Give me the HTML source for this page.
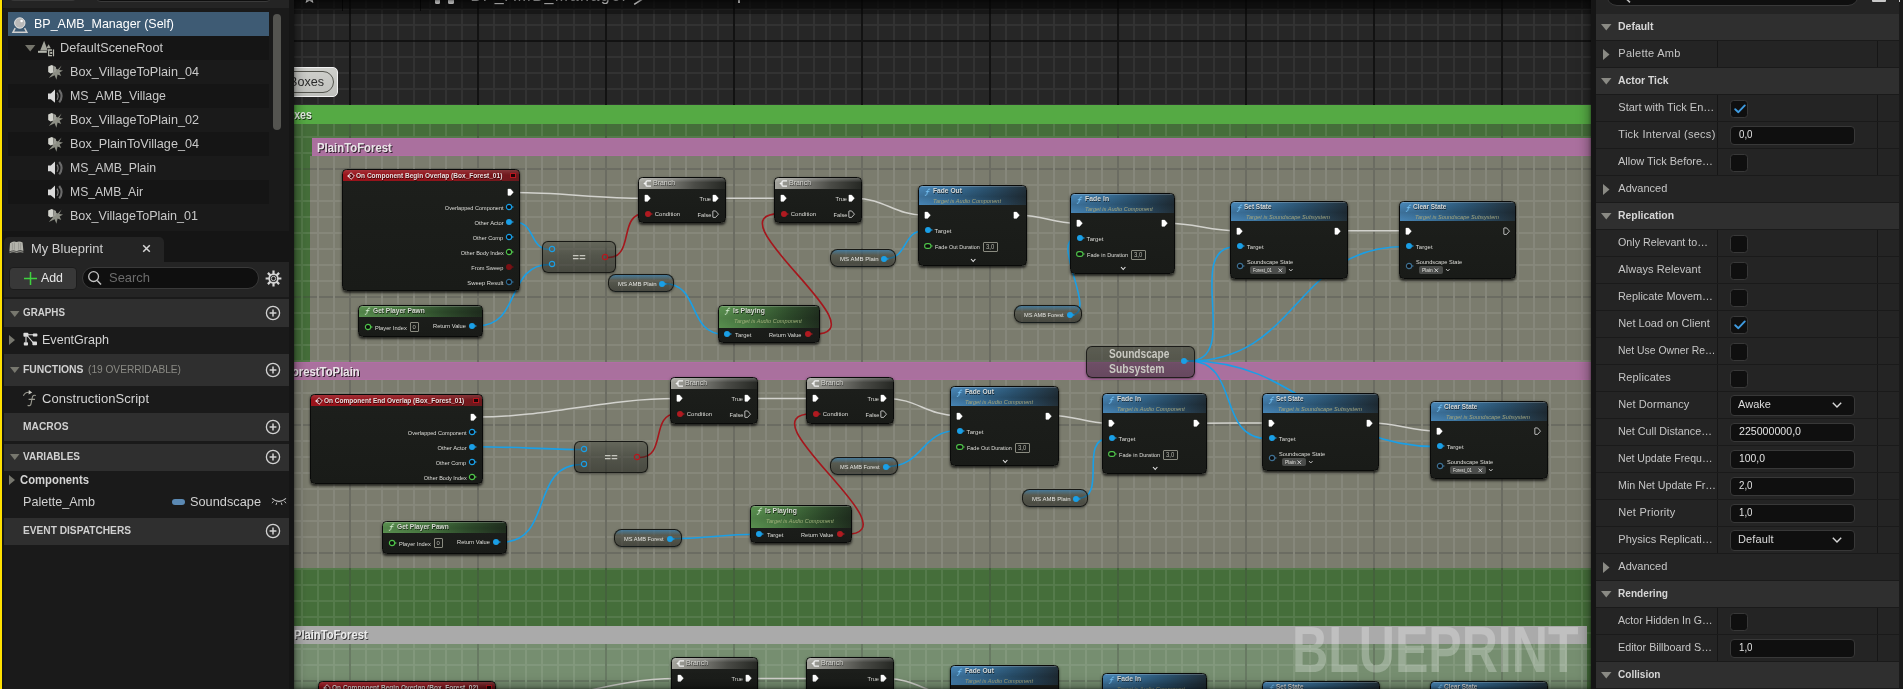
<!DOCTYPE html>
<html lang="en"><head><meta charset="utf-8"><title>BP_AMB_Manager - Blueprint Editor</title>
<style>
*{box-sizing:border-box;margin:0;padding:0}
html,body{width:1903px;height:689px;overflow:hidden;background:#151515}
body{font-family:"Liberation Sans",sans-serif;color:#c8c8c8}
#app{position:absolute;left:0;top:0;width:1903px;height:689px;overflow:hidden;will-change:transform}
.t{position:absolute;white-space:pre;display:block}
.a{position:absolute}
.ystrip{position:absolute;left:0;top:0;width:2.4px;height:689px;background:#ffe100}
svg{position:absolute;overflow:visible}
/* ---------- left ---------- */
#left{position:absolute;left:0;top:0;width:294px;height:689px}
.lrow{position:absolute;left:8px;width:261px;height:24px}
.hdr{position:absolute;left:4px;width:285px;background:#2f2f2f}
/* ---------- graph ---------- */
#graph{position:absolute;left:294px;top:0;width:1297px;height:689px;overflow:hidden;background:#262626}
.grid0{position:absolute;left:0;top:0;width:100%;height:100%;
 background-image:linear-gradient(to right,#000 2px,transparent 2px),linear-gradient(to bottom,#000 2px,transparent 2px),
 linear-gradient(to right,#1f1f1f 2px,transparent 2px),linear-gradient(to bottom,#1f1f1f 2px,transparent 2px);
 background-size:128px 128px,128px 128px,16px 16px,16px 16px;background-position:55px 40px,55px 40px,7px 8px,7px 8px}
.grid1{position:absolute;left:0;top:0;width:100%;height:100%;
 background-image:linear-gradient(to right,rgba(0,0,0,.2) 2px,transparent 2px),linear-gradient(to right,rgba(255,255,255,.088) 2px,transparent 2px);
 background-size:128px 128px,16px 16px;background-position:55px 40px,7px 8px}
.grid2{position:absolute;left:0;top:0;width:100%;height:100%;
 background-image:linear-gradient(to bottom,rgba(0,0,0,.2) 2px,transparent 2px),linear-gradient(to bottom,rgba(255,255,255,.088) 2px,transparent 2px);
 background-size:128px 128px,16px 16px;background-position:55px 40px,7px 8px;
 -webkit-mask-image:linear-gradient(to right,transparent 2px,#000 2px);mask-image:linear-gradient(to right,transparent 2px,#000 2px);
 -webkit-mask-size:16px 16px;mask-size:16px 16px;-webkit-mask-position:7px 8px;mask-position:7px 8px}
.cb{position:absolute}
.ch{position:absolute}
.ctitle{text-shadow:1px 1px 0 rgba(0,0,0,.75)}
.node{position:absolute;background:linear-gradient(to bottom,#1d1f1c,#191b18);border:1px solid #090a09;border-radius:4.5px;box-shadow:0 1.5px 2.5px rgba(0,0,0,.7)}
.nt{position:absolute;left:0;top:0;right:0;border-radius:3.5px 3.5px 0 0}
.nt.red{background:linear-gradient(to bottom,rgba(255,255,255,.13),rgba(255,255,255,0) 45%),linear-gradient(100deg,#9a131b 0%,#8e151c 60%,#6a191d 100%)}
.nt.grey{background:linear-gradient(to bottom,rgba(255,255,255,.25),rgba(255,255,255,0) 40%),linear-gradient(100deg,#a4a49d 0%,#82827c 30%,#4a4b46 65%,#252723 100%)}
.nt.blue{background:linear-gradient(to bottom,rgba(255,255,255,.2) 0,rgba(255,255,255,.2) 1px,rgba(0,0,0,0) 1px,rgba(0,0,0,.16) 55%,rgba(0,0,0,0) 100%),linear-gradient(100deg,#4987b8 0%,#3a729c 30%,#2c5573 60%,#222f38 100%)}
.nt.green{background:linear-gradient(to bottom,rgba(255,255,255,.2) 0,rgba(255,255,255,.2) 1px,rgba(0,0,0,0) 1px,rgba(0,0,0,.1) 55%,rgba(0,0,0,0) 100%),linear-gradient(100deg,#5b9251 0%,#487841 35%,#2f4d2c 70%,#202e1f 100%)}
.nsh{text-shadow:.6px .6px 0 rgba(0,0,0,.7)}
.vbox{position:absolute;border:1px solid #8a8b80;border-radius:1px}
.compact{position:absolute;border:1px solid rgba(18,19,16,.9);border-radius:6px;background:linear-gradient(to bottom,rgba(78,80,70,.5) 0%,rgba(44,46,40,.5) 45%,rgba(22,23,19,.5) 100%);box-shadow:0 1px 2.5px rgba(0,0,0,.45)}
.varn{position:absolute;border:1px solid rgba(18,19,16,.9);border-radius:7.5px;background:linear-gradient(to bottom,rgba(40,140,215,.5) 0%,rgba(40,140,210,0) 32%),linear-gradient(to bottom,rgba(74,76,66,.5) 0%,rgba(44,46,40,.5) 50%,rgba(20,21,18,.5) 100%);box-shadow:0 1px 2.5px rgba(0,0,0,.45)}
.chip{position:absolute;background:#4a4c4a;border-radius:2px}
/* ---------- right ---------- */
#right{position:absolute;left:1596px;top:0;width:307px;height:689px;background:#1a1a1a}
.rrow{position:absolute;left:0;width:303px;height:26px;background:#242424}
.rhdr{position:absolute;left:0;width:303px;height:26px;background:#2f2f2f}
.inp{position:absolute;left:134px;width:125px;background:#0f0f0f;border:1px solid #383838;border-radius:4px}
.cbx{position:absolute;left:134px;width:18px;height:18px;background:#0f0f0f;border:1px solid #383838;border-radius:3.5px}

</style></head>
<body>
<div id="app">
<div class="ystrip"></div>
<div id="left">
<div class="a" style="left:3px;top:0;width:286px;height:8px;background:#242424"></div><div class="a" style="left:9.5px;top:-4px;width:66px;height:5px;background:#383838;border-radius:0 0 4px 4px"></div><div class="a" style="left:95px;top:-10px;width:177px;height:11.5px;background:#0f0f0f;border:1px solid #3a3a3a;border-radius:0 0 6px 6px"></div><div class="a" style="left:3px;top:8px;width:286px;height:223px;background:#1a1a1a;border-radius:3px 0 0 0"></div><div class="lrow" style="top:12px;background:#3e5b74"></div><svg class="a" style="left:12px;top:15.5px" width="16" height="18" viewBox="0 0 16 18"><circle cx="7.8" cy="7" r="5.2" fill="#b9b9b9" stroke="#e4e4e4" stroke-width="1"/><circle cx="9.6" cy="5" r="1.3" fill="#fff"/><path d="M3.2 12.2 L1 16.2 H14.8 L12.6 12.2" fill="none" stroke="#d0d0d0" stroke-width="1.5"/></svg><span class="t" style="font-size:13px;line-height:18px;top:14.60px;color:#ffffff;left:34.00px;transform-origin:0 50%;transform:scaleX(0.9592);">BP_AMB_Manager (Self)</span>
<div class="lrow" style="top:36px;background:#151515"></div><svg class="a" style="left:24.6px;top:45.3px" width="10.4" height="6.5" viewBox="0 0 10.4 6.5"><path d="M0 0 H10.4 L5.2 6.5 Z" fill="#74746b"/></svg><svg class="a" style="left:38px;top:38.5px" width="17" height="19" viewBox="0 0 17 19"><path d="M2.2 11.6 L6.1 1.8 L9.8 11.6 Z" fill="#a3a59b"/><path d="M8.4 9.2 L10.6 5.2 L12.8 9.2 Z" fill="#a3a59b"/><rect x="0" y="11.8" width="8.8" height="2" fill="#b4b6ac"/><path d="M14 11 H10.7 V16.7 H14" fill="none" stroke="#b8bab0" stroke-width="1.3"/><path d="M15.5 10.4 V17.3" stroke="#b8bab0" stroke-width="1.2"/><rect x="12.2" y="12.9" width="2" height="2" fill="#b8bab0"/></svg><span class="t" style="font-size:13px;line-height:18px;top:38.60px;color:#c9c9c9;left:60.00px;transform-origin:0 50%;transform:scaleX(0.9762);">DefaultSceneRoot</span>
<div class="lrow" style="top:60px;background:#1a1a1a"></div><svg class="a" style="left:47px;top:63.5px" width="17" height="17" viewBox="0 0 17 17"><path d="M14.6 1.4 L12.2 6 L16 6.4 L12.6 8.6 L14.2 12 L10.6 10.6 L9.4 15.8 L7.6 11.2 L1.8 14 L5.6 9.4 L8 4 L10.8 5.4 Z" fill="#8d8f85"/><path d="M1.2 2.6 L4.6 1 L6.4 1.8 V8.4 L3.6 9.4 L1.2 8 Z" fill="#d2d3cc"/><path d="M6.4 1.8 L9 3 V7.6 L6.4 8.6 Z" fill="#9c9d95"/></svg><span class="t" style="font-size:13px;line-height:18px;top:62.60px;color:#c9c9c9;left:70.00px;transform-origin:0 50%;transform:scaleX(0.9718);">Box_VillageToPlain_04</span>
<div class="lrow" style="top:84px;background:#151515"></div><svg class="a" style="left:47px;top:87.5px" width="17" height="17" viewBox="0 0 17 17"><path d="M1 5.4 H3.8 L8 1.6 V14.8 L3.8 11.2 H1 Z" fill="#d9d9d9"/><path d="M10 4.6 Q12.2 8.2 10 11.8" fill="none" stroke="#7e7e7e" stroke-width="1.2"/><path d="M12.2 2 Q17 8.2 12.2 14.4" fill="none" stroke="#6b6b6b" stroke-width="2.1"/></svg><span class="t" style="font-size:13px;line-height:18px;top:86.60px;color:#c9c9c9;left:70.00px;transform-origin:0 50%;transform:scaleX(0.9512);">MS_AMB_Village</span>
<div class="lrow" style="top:108px;background:#1a1a1a"></div><svg class="a" style="left:47px;top:111.5px" width="17" height="17" viewBox="0 0 17 17"><path d="M14.6 1.4 L12.2 6 L16 6.4 L12.6 8.6 L14.2 12 L10.6 10.6 L9.4 15.8 L7.6 11.2 L1.8 14 L5.6 9.4 L8 4 L10.8 5.4 Z" fill="#8d8f85"/><path d="M1.2 2.6 L4.6 1 L6.4 1.8 V8.4 L3.6 9.4 L1.2 8 Z" fill="#d2d3cc"/><path d="M6.4 1.8 L9 3 V7.6 L6.4 8.6 Z" fill="#9c9d95"/></svg><span class="t" style="font-size:13px;line-height:18px;top:110.60px;color:#c9c9c9;left:70.00px;transform-origin:0 50%;transform:scaleX(0.9718);">Box_VillageToPlain_02</span>
<div class="lrow" style="top:132px;background:#151515"></div><svg class="a" style="left:47px;top:135.5px" width="17" height="17" viewBox="0 0 17 17"><path d="M14.6 1.4 L12.2 6 L16 6.4 L12.6 8.6 L14.2 12 L10.6 10.6 L9.4 15.8 L7.6 11.2 L1.8 14 L5.6 9.4 L8 4 L10.8 5.4 Z" fill="#8d8f85"/><path d="M1.2 2.6 L4.6 1 L6.4 1.8 V8.4 L3.6 9.4 L1.2 8 Z" fill="#d2d3cc"/><path d="M6.4 1.8 L9 3 V7.6 L6.4 8.6 Z" fill="#9c9d95"/></svg><span class="t" style="font-size:13px;line-height:18px;top:134.60px;color:#c9c9c9;left:70.00px;transform-origin:0 50%;transform:scaleX(0.9718);">Box_PlainToVillage_04</span>
<div class="lrow" style="top:156px;background:#1a1a1a"></div><svg class="a" style="left:47px;top:159.5px" width="17" height="17" viewBox="0 0 17 17"><path d="M1 5.4 H3.8 L8 1.6 V14.8 L3.8 11.2 H1 Z" fill="#d9d9d9"/><path d="M10 4.6 Q12.2 8.2 10 11.8" fill="none" stroke="#7e7e7e" stroke-width="1.2"/><path d="M12.2 2 Q17 8.2 12.2 14.4" fill="none" stroke="#6b6b6b" stroke-width="2.1"/></svg><span class="t" style="font-size:13px;line-height:18px;top:158.60px;color:#c9c9c9;left:70.00px;transform-origin:0 50%;transform:scaleX(0.9446);">MS_AMB_Plain</span>
<div class="lrow" style="top:180px;background:#151515"></div><svg class="a" style="left:47px;top:183.5px" width="17" height="17" viewBox="0 0 17 17"><path d="M1 5.4 H3.8 L8 1.6 V14.8 L3.8 11.2 H1 Z" fill="#d9d9d9"/><path d="M10 4.6 Q12.2 8.2 10 11.8" fill="none" stroke="#7e7e7e" stroke-width="1.2"/><path d="M12.2 2 Q17 8.2 12.2 14.4" fill="none" stroke="#6b6b6b" stroke-width="2.1"/></svg><span class="t" style="font-size:13px;line-height:18px;top:182.60px;color:#c9c9c9;left:70.00px;transform-origin:0 50%;transform:scaleX(0.9355);">MS_AMB_Air</span>
<div class="lrow" style="top:204px;background:#1a1a1a"></div><svg class="a" style="left:47px;top:207.5px" width="17" height="17" viewBox="0 0 17 17"><path d="M14.6 1.4 L12.2 6 L16 6.4 L12.6 8.6 L14.2 12 L10.6 10.6 L9.4 15.8 L7.6 11.2 L1.8 14 L5.6 9.4 L8 4 L10.8 5.4 Z" fill="#8d8f85"/><path d="M1.2 2.6 L4.6 1 L6.4 1.8 V8.4 L3.6 9.4 L1.2 8 Z" fill="#d2d3cc"/><path d="M6.4 1.8 L9 3 V7.6 L6.4 8.6 Z" fill="#9c9d95"/></svg><span class="t" style="font-size:13px;line-height:18px;top:206.60px;color:#c9c9c9;left:70.00px;transform-origin:0 50%;transform:scaleX(0.9642);">Box_VillageToPlain_01</span>
<div class="a" style="left:273px;top:14px;width:7.5px;height:116px;background:#545450;border-radius:4px"></div>
<div class="a" style="left:4px;top:237px;width:160px;height:26px;background:#242424;border-radius:5px 5px 0 0"></div><svg class="a" style="left:9px;top:239.5px" width="15" height="14" viewBox="0 0 15 14"><path d="M1 3.2 Q4 0.6 7.4 2 Q10.6 0.6 13.6 2.6 L14.4 11 Q10.8 9.4 7.6 11.2 Q4.2 9.6 0.4 11.6 Z" fill="#b4b4ac"/><path d="M0.6 12.6 Q4.2 10.8 7.6 12.4 Q10.8 10.8 14.4 12.2" stroke="#8a8a84" stroke-width="1.2" fill="none"/><path d="M3.4 3 V9.6 M5.4 2.6 V9.6 M9.6 2.6 V9.6 M11.6 3 V9.6" stroke="#8e8e88" stroke-width=".7"/></svg><span class="t" style="font-size:13px;line-height:18px;top:240.00px;color:#cfcfcf;left:31.00px;transform-origin:0 50%;transform:scaleX(0.9965);">My Blueprint</span><svg class="a" style="left:141.5px;top:243.5px" width="9" height="9" viewBox="0 0 9 9"><path d="M1.2 1.2 L7.8 7.8 M7.8 1.2 L1.2 7.8" stroke="#d6d6d6" stroke-width="1.5"/></svg>
<div class="a" style="left:4px;top:262px;width:285px;height:35px;background:#242424"></div><div class="a" style="left:8.6px;top:266.5px;width:68px;height:23.5px;background:#383838;border:1px solid #1c1c1c;border-radius:4px"></div><svg class="a" style="left:23.5px;top:271.5px" width="13" height="13" viewBox="0 0 13 13"><path d="M6.5 0 V13 M0 6.5 H13" stroke="#3fd23f" stroke-width="1.5"/></svg><span class="t" style="font-size:13px;line-height:18px;top:269.40px;color:#e8e8e8;left:41.00px;transform-origin:0 50%;transform:scaleX(0.9507);">Add</span><div class="a" style="left:81.5px;top:266.8px;width:177px;height:22.6px;background:#0f0f0f;border:1px solid #393939;border-radius:11.5px"></div><svg class="a" style="left:86.5px;top:270px" width="16" height="16" viewBox="0 0 16 16"><circle cx="6.6" cy="6.6" r="4.9" fill="none" stroke="#c4c4c4" stroke-width="1.3"/><path d="M10.2 10.4 L14 14.4" stroke="#c4c4c4" stroke-width="1.5"/></svg><span class="t" style="font-size:13px;line-height:18px;top:268.80px;color:#6c6c6c;left:109.00px;transform-origin:0 50%;transform:scaleX(0.9951);">Search</span><svg class="a" style="left:264.5px;top:269.5px" width="17" height="17" viewBox="0 0 17 17"><g stroke="#d4d4d4" stroke-width="2.2"><path d="M8.5 .6V16.4M.6 8.5H16.4M2.9 2.9L14.1 14.1M14.1 2.9L2.9 14.1"/></g><circle cx="8.5" cy="8.5" r="5.2" fill="#d4d4d4"/><circle cx="8.5" cy="8.5" r="3.5" fill="#242424"/><circle cx="8.5" cy="8.5" r="2.2" fill="none" stroke="#d4d4d4" stroke-width=".9"/></svg>
<div class="a" style="left:4px;top:297px;width:285px;height:392px;background:#1a1a1a"></div><div class="hdr" style="top:299px;height:28px"></div><svg class="a" style="left:10px;top:310.5px" width="9.5" height="6" viewBox="0 0 9.5 6"><path d="M0 0 H9.5 L4.75 6 Z" fill="#77776e"/></svg><span class="t" style="font-size:10.5px;line-height:15px;top:304.70px;color:#d0d0d0;font-weight:700;left:23.00px;transform-origin:0 50%;transform:scaleX(0.9346);">GRAPHS</span><svg class="a" style="left:265px;top:305px" width="16" height="16" viewBox="0 0 16 16"><circle cx="8" cy="8" r="6.6" fill="none" stroke="#d2d2d2" stroke-width="1.3"/><path d="M8 4.6 V11.4 M4.6 8 H11.4" stroke="#d2d2d2" stroke-width="1.5"/></svg><svg class="a" style="left:9px;top:334.5px" width="6" height="10" viewBox="0 0 6 10"><path d="M0 0 L6 5.0 L0 10 Z" fill="#77776e"/></svg><svg class="a" style="left:23px;top:332px" width="15" height="15" viewBox="0 0 15 15"><g fill="#dcdcdc"><rect x="0.4" y="0.8" width="5" height="4" rx="1"/><rect x="9.8" y="1.6" width="4.6" height="3" rx=".8"/><rect x="0.8" y="10.2" width="4.2" height="3.4" rx=".8"/><rect x="9.4" y="9.6" width="4.6" height="3.6" rx=".8"/></g><path d="M5 2.8 H10 M3 4.6 V10.4 M4.6 4 L10.2 10.6" stroke="#dcdcdc" stroke-width="1.1" fill="none"/></svg><span class="t" style="font-size:13px;line-height:18px;top:330.80px;color:#d4d4d4;left:42.00px;transform-origin:0 50%;transform:scaleX(0.9658);">EventGraph</span>
<div class="hdr" style="top:354px;height:32px"></div><svg class="a" style="left:10px;top:366.5px" width="9.5" height="6" viewBox="0 0 9.5 6"><path d="M0 0 H9.5 L4.75 6 Z" fill="#77776e"/></svg><span class="t" style="font-size:10.5px;line-height:15px;top:361.50px;color:#d0d0d0;font-weight:700;left:23.00px;transform-origin:0 50%;transform:scaleX(0.9878);">FUNCTIONS</span><span class="t" style="font-size:10.5px;line-height:15px;top:361.50px;color:#8a8a84;left:87.50px;transform-origin:0 50%;transform:scaleX(0.9659);">(19 OVERRIDABLE)</span><svg class="a" style="left:265px;top:362px" width="16" height="16" viewBox="0 0 16 16"><circle cx="8" cy="8" r="6.6" fill="none" stroke="#d2d2d2" stroke-width="1.3"/><path d="M8 4.6 V11.4 M4.6 8 H11.4" stroke="#d2d2d2" stroke-width="1.5"/></svg><svg class="a" style="left:22px;top:389px" width="17" height="18" viewBox="0 0 17 18"><path d="M1.4 6.8 Q3.2 2.6 8 3.4" fill="none" stroke="#9a9a90" stroke-width="1.1"/><path d="M6.8 1 L10.2 3.4 L6.6 5.4 Z" fill="#c8c8c0"/><path d="M13.8 6.6 Q10.8 5.2 10.2 8.8 L9 15 Q8.4 17.2 5.6 16.4 M6.6 10.4 H13" fill="none" stroke="#9a9a90" stroke-width="1.1"/></svg><span class="t" style="font-size:13px;line-height:18px;top:390.00px;color:#d4d4d4;left:42.00px;transform-origin:0 50%;letter-spacing:0.046px;">ConstructionScript</span>
<div class="hdr" style="top:412.5px;height:28px"></div><span class="t" style="font-size:10.5px;line-height:15px;top:418.50px;color:#d0d0d0;font-weight:700;left:23.00px;transform-origin:0 50%;transform:scaleX(0.9749);">MACROS</span><svg class="a" style="left:265px;top:419px" width="16" height="16" viewBox="0 0 16 16"><circle cx="8" cy="8" r="6.6" fill="none" stroke="#d2d2d2" stroke-width="1.3"/><path d="M8 4.6 V11.4 M4.6 8 H11.4" stroke="#d2d2d2" stroke-width="1.5"/></svg><div class="hdr" style="top:443.5px;height:27px"></div><svg class="a" style="left:10px;top:453.5px" width="9.5" height="6" viewBox="0 0 9.5 6"><path d="M0 0 H9.5 L4.75 6 Z" fill="#77776e"/></svg><span class="t" style="font-size:10.5px;line-height:15px;top:449.00px;color:#d0d0d0;font-weight:700;left:23.00px;transform-origin:0 50%;transform:scaleX(0.9515);">VARIABLES</span><svg class="a" style="left:265px;top:449px" width="16" height="16" viewBox="0 0 16 16"><circle cx="8" cy="8" r="6.6" fill="none" stroke="#d2d2d2" stroke-width="1.3"/><path d="M8 4.6 V11.4 M4.6 8 H11.4" stroke="#d2d2d2" stroke-width="1.5"/></svg><svg class="a" style="left:9px;top:475px" width="6" height="10" viewBox="0 0 6 10"><path d="M0 0 L6 5.0 L0 10 Z" fill="#77776e"/></svg><span class="t" style="font-size:12px;line-height:17px;top:471.50px;color:#d4d4d4;font-weight:700;left:20.00px;transform-origin:0 50%;transform:scaleX(0.9408);">Components</span><span class="t" style="font-size:13px;line-height:18px;top:492.80px;color:#d0d0d0;left:23.00px;transform-origin:0 50%;transform:scaleX(0.9673);">Palette_Amb</span><div class="a" style="left:172px;top:498.5px;width:12.5px;height:6px;background:#5b89b3;border-radius:3px"></div><span class="t" style="font-size:13px;line-height:18px;top:492.80px;color:#d0d0d0;left:190.00px;transform-origin:0 50%;transform:scaleX(0.9823);">Soundscape</span><svg class="a" style="left:270.5px;top:497px" width="16" height="10" viewBox="0 0 16 10"><path d="M1 1.4 Q8 7.6 15 1.4" fill="none" stroke="#b8b8b8" stroke-width="1.2"/><path d="M2.6 4.2 L1 6.2 M5.8 5.6 L5 8 M10.2 5.6 L11 8 M13.4 4.2 L15 6.2" stroke="#b8b8b8" stroke-width="1"/></svg>
<div class="hdr" style="top:517.5px;height:27.5px"></div><span class="t" style="font-size:10.5px;line-height:15px;top:523.00px;color:#d0d0d0;font-weight:700;left:23.00px;transform-origin:0 50%;transform:scaleX(0.9675);">EVENT DISPATCHERS</span><svg class="a" style="left:265px;top:523px" width="16" height="16" viewBox="0 0 16 16"><circle cx="8" cy="8" r="6.6" fill="none" stroke="#d2d2d2" stroke-width="1.3"/><path d="M8 4.6 V11.4 M4.6 8 H11.4" stroke="#d2d2d2" stroke-width="1.5"/></svg></div>
<div id="graph">
<div class="grid0"></div>
<div class="cb" style="left:0;top:124px;width:1297px;height:565px;background:#456e3a"></div><div class="cb" style="left:16px;top:156px;width:1281px;height:206px;background:#7b7c6e"></div><div class="cb" style="left:0;top:380px;width:1297px;height:188px;background:#7b7c6e"></div><div class="cb" style="left:0;top:644px;width:1292.5px;height:45px;background:#768e70"></div>
<div class="grid1"></div><div class="grid2"></div>
<div class="ch" style="left:0;top:105.3px;width:1297px;height:18.7px;background:#55aa44"></div><span class="t" style="font-size:13px;line-height:16px;top:107.20px;color:#e4ece2;font-weight:700;left:-14.10px;transform-origin:0 50%;transform:scaleX(0.8173);text-shadow:1px 1px 0 rgba(0,0,0,.7);">Boxes</span><div class="ch" style="left:17.7px;top:137.8px;width:1280px;height:18.2px;background:#aa709e;border-top:1px solid #b26da6;border-bottom:1px solid #b06ea3"></div><span class="t" style="font-size:12px;line-height:14px;top:140.60px;color:#ece6ea;font-weight:700;left:23.10px;transform-origin:0 50%;transform:scaleX(0.9466);text-shadow:1px 1px 0 rgba(0,0,0,.75);">PlainToForest</span><div class="ch" style="left:0;top:361.8px;width:1297px;height:18.2px;background:#aa709e;border-top:1px solid #b26da6;border-bottom:1px solid #b06ea3"></div><span class="t" style="font-size:12px;line-height:14px;top:364.60px;color:#ece6ea;font-weight:700;left:-9.00px;transform-origin:0 50%;transform:scaleX(0.9441);text-shadow:1px 1px 0 rgba(0,0,0,.75);">ForestToPlain</span><div class="ch" style="left:0;top:625.8px;width:1292.5px;height:18.2px;background:#aaaaaa"></div><span class="t" style="font-size:12px;line-height:14px;top:628.40px;color:#ececec;font-weight:700;left:0.20px;transform-origin:0 50%;transform:scaleX(0.9302);text-shadow:1px 1px 0 rgba(0,0,0,.7);">PlainToForest</span>
<div class="a" style="left:-40px;top:66.8px;width:84.2px;height:30.4px;background:linear-gradient(to bottom,#cfd0cc,#bfc0bc);border:1.4px solid #f2f2f2;border-radius:5px"></div><div class="a" style="left:-40px;top:71px;width:80px;height:21.8px;border:1px solid #55564f;border-radius:11px"></div><span class="t" style="font-size:13px;line-height:16px;top:74.00px;color:#2a2a2a;left:-4.80px;transform-origin:0 50%;transform:scaleX(0.9684);">Boxes</span>
<svg style="left:0;top:0" width="1297" height="689" viewBox="0 0 1297 689" fill="none" stroke-linecap="round">
<path d="M220.3 192.6 C265.5 192.6 305.0 198.3 350.2 198.3" stroke="#d2d2cd" stroke-width="1.5"/>
<path d="M220.9 222.2 C241.6 222.2 235.1 249.5 255.9 249.5" stroke="#1a9fe6" stroke-width="1.6"/>
<path d="M183.3 325.8 C227.9 325.8 211.3 264.5 255.9 264.5" stroke="#1a9fe6" stroke-width="1.6"/>
<path d="M314.1 257.5 C340.9 257.5 323.9 213.6 350.7 213.6" stroke="#a5161c" stroke-width="1.6"/>
<path d="M425.3 198.3 C445.6 198.3 465.8 198.3 486.1 198.3" stroke="#d2d2cd" stroke-width="1.5"/>
<path d="M369.8 283.5 C406.7 283.5 393.0 334.2 429.9 334.2" stroke="#1a9fe6" stroke-width="1.6"/>
<path d="M519.1 334.2 C593.3 334.2 412.4 213.6 486.6 213.6" stroke="#a5161c" stroke-width="1.6"/>
<path d="M561.2 198.3 C589.8 198.3 601.4 215.2 630.0 215.2" stroke="#d2d2cd" stroke-width="1.5"/>
<path d="M591.9 258.6 C614.1 258.6 608.2 230.6 630.4 230.6" stroke="#1a9fe6" stroke-width="1.6"/>
<path d="M726.2 215.2 C747.5 215.2 760.6 223.3 781.9 223.3" stroke="#d2d2cd" stroke-width="1.5"/>
<path d="M777.6 314.8 C804.5 314.8 755.4 238.7 782.3 238.7" stroke="#1a9fe6" stroke-width="1.6"/>
<path d="M874.4 223.3 C899.4 223.3 916.9 230.8 941.9 230.8" stroke="#d2d2cd" stroke-width="1.5"/>
<path d="M1046.9 230.8 C1068.0 230.8 1089.2 230.8 1110.3 230.8" stroke="#d2d2cd" stroke-width="1.5"/>
<path d="M894.8 361.0 C948.8 361.0 888.3 246.5 942.3 246.5" stroke="#1a9fe6" stroke-width="1.6"/>
<path d="M894.8 361.0 C1004.9 361.0 1000.6 246.5 1110.7 246.5" stroke="#1a9fe6" stroke-width="1.6"/>
<path d="M182.9 417.0 C255.5 417.0 309.7 398.5 382.3 398.5" stroke="#d2d2cd" stroke-width="1.5"/>
<path d="M183.5 446.7 C219.2 446.7 252.0 449.5 287.7 449.5" stroke="#1a9fe6" stroke-width="1.6"/>
<path d="M207.4 542.2 C260.1 542.2 235.0 464.5 287.7 464.5" stroke="#1a9fe6" stroke-width="1.6"/>
<path d="M345.9 457.5 C372.8 457.5 355.9 413.8 382.8 413.8" stroke="#a5161c" stroke-width="1.6"/>
<path d="M457.4 398.5 C477.7 398.5 498.0 398.5 518.3 398.5" stroke="#d2d2cd" stroke-width="1.5"/>
<path d="M377.7 538.8 C407.2 538.8 432.3 534.3 461.8 534.3" stroke="#1a9fe6" stroke-width="1.6"/>
<path d="M551.0 534.3 C625.0 534.3 444.8 413.8 518.8 413.8" stroke="#a5161c" stroke-width="1.6"/>
<path d="M593.4 398.5 C621.9 398.5 633.6 415.4 662.1 415.4" stroke="#d2d2cd" stroke-width="1.5"/>
<path d="M594.0 466.5 C628.7 466.5 627.8 430.8 662.5 430.8" stroke="#1a9fe6" stroke-width="1.6"/>
<path d="M758.3 415.4 C779.4 415.4 792.8 423.2 813.9 423.2" stroke="#d2d2cd" stroke-width="1.5"/>
<path d="M784.0 498.3 C814.0 498.3 784.3 438.6 814.3 438.6" stroke="#1a9fe6" stroke-width="1.6"/>
<path d="M906.4 423.2 C928.9 423.2 951.0 422.9 973.5 422.9" stroke="#d2d2cd" stroke-width="1.5"/>
<path d="M1078.5 422.9 C1102.3 422.9 1118.0 430.9 1141.8 430.9" stroke="#d2d2cd" stroke-width="1.5"/>
<path d="M894.8 361.0 C947.0 361.0 921.7 438.6 973.9 438.6" stroke="#1a9fe6" stroke-width="1.6"/>
<path d="M894.8 361.0 C1005.8 361.0 1031.2 446.6 1142.2 446.6" stroke="#1a9fe6" stroke-width="1.6"/>
<path d="M196.5 704.6 C267.2 704.6 311.8 678.6 382.5 678.6" stroke="#d2d2cd" stroke-width="1.5"/>
<path d="M457.6 678.6 C477.8 678.6 498.1 678.6 518.3 678.6" stroke="#d2d2cd" stroke-width="1.5"/>
<path d="M593.4 678.6 C621.9 678.6 633.6 695.3 662.1 695.3" stroke="#d2d2cd" stroke-width="1.5"/>
<path d="M758.3 695.3 C779.5 695.3 792.7 703.2 813.9 703.2" stroke="#d2d2cd" stroke-width="1.5"/>
</svg>
<div class="node" style="left:48px;top:169px;width:178px;height:122px;"><div class="nt red" style="height:11px"></div><svg class="a" style="left:4px;top:1.9px" width="8" height="8" viewBox="0 0 9 9"><path d="M4.6 .8 L8.3 4.5 L4.6 8.2 L.9 4.5 Z" fill="#5c0a10" stroke="#efe3e6" stroke-width="1.05"/><path d="M.2 4.5 L2.6 2.9 V6.1 Z" fill="#efe3e6"/><path d="M2 4.5 H4.6" stroke="#efe3e6" stroke-width="1"/></svg><span class="t" style="font-size:8px;line-height:10px;top:0.60px;color:#e6dede;font-weight:700;left:13.20px;transform-origin:0 50%;transform:scaleX(0.8167);text-shadow:.6px .6px 0 rgba(40,0,0,.8);">On Component Begin Overlap (Box_Forest_01)</span><div class="a" style="left:167.00px;top:3px;width:6px;height:5px;background:#1c0506;border:1px solid #b8161f"></div><svg class="a" style="left:164.10px;top:18.40px" width="7.4" height="8.3" viewBox="0 0 8 9"><path d="M1.3 1 H3.9 L7 4.5 L3.9 8 H1.3 Q.9 8 .9 7.6 V1.4 Q.9 1 1.3 1 Z" fill="#ffffff" stroke="#ffffff" stroke-width="0.3"/></svg><span class="t" style="font-size:5.9px;line-height:8px;top:33.70px;color:#dededa;right:15.50px;transform-origin:100% 50%;transform:scaleX(0.9385);">Overlapped Component</span><svg class="a" style="left:161.00px;top:32.00px" width="11" height="10" viewBox="0 0 11 10"><circle cx="5" cy="5" r="2.65" fill="#0d0d0d" stroke="#1a9fe6" stroke-width="1.1"/><path d="M8.3 3.7 L9.8 5 L8.3 6.3 Z" fill="#1a9fe6"/></svg><span class="t" style="font-size:5.9px;line-height:8px;top:48.75px;color:#dededa;right:15.50px;transform-origin:100% 50%;transform:scaleX(0.9867);">Other Actor</span><svg class="a" style="left:161.00px;top:47.05px" width="11" height="10" viewBox="0 0 11 10"><circle cx="5" cy="5" r="3.0" fill="#1a9fe6" stroke="#1a9fe6" stroke-width="0"/><path d="M8.3 3.7 L9.8 5 L8.3 6.3 Z" fill="#1a9fe6"/></svg><span class="t" style="font-size:5.9px;line-height:8px;top:63.80px;color:#dededa;right:15.50px;transform-origin:100% 50%;transform:scaleX(0.9472);">Other Comp</span><svg class="a" style="left:161.00px;top:62.10px" width="11" height="10" viewBox="0 0 11 10"><circle cx="5" cy="5" r="2.65" fill="#0d0d0d" stroke="#1a9fe6" stroke-width="1.1"/><path d="M8.3 3.7 L9.8 5 L8.3 6.3 Z" fill="#1a9fe6"/></svg><span class="t" style="font-size:5.9px;line-height:8px;top:78.85px;color:#dededa;right:15.50px;transform-origin:100% 50%;transform:scaleX(0.9401);">Other Body Index</span><svg class="a" style="left:161.00px;top:77.15px" width="11" height="10" viewBox="0 0 11 10"><circle cx="5" cy="5" r="2.65" fill="#0d0d0d" stroke="#4fc44a" stroke-width="1.1"/><path d="M8.3 3.7 L9.8 5 L8.3 6.3 Z" fill="#4fc44a"/></svg><span class="t" style="font-size:5.9px;line-height:8px;top:93.90px;color:#dededa;right:15.50px;transform-origin:100% 50%;transform:scaleX(0.9609);">From Sweep</span><svg class="a" style="left:161.00px;top:92.20px" width="11" height="10" viewBox="0 0 11 10"><circle cx="5" cy="5" r="3.0" fill="#7a1014" stroke="#7a1014" stroke-width="0"/><path d="M8.3 3.7 L9.8 5 L8.3 6.3 Z" fill="#7a1014"/></svg><span class="t" style="font-size:5.9px;line-height:8px;top:108.95px;color:#dededa;right:15.50px;transform-origin:100% 50%;transform:scaleX(0.9929);">Sweep Result</span><svg class="a" style="left:161.00px;top:107.25px" width="11" height="10" viewBox="0 0 11 10"><circle cx="5" cy="5" r="2.65" fill="#0d0d0d" stroke="#2d6a92" stroke-width="1.1"/><path d="M8.3 3.7 L9.8 5 L8.3 6.3 Z" fill="#2d6a92"/></svg></div>
<div class="node" style="left:344px;top:177px;width:88px;height:46px;"><div class="nt grey" style="height:11px"></div><svg class="a" style="left:4px;top:1px" width="9" height="9" viewBox="0 0 9 9"><path d="M8 1.9 H4.2 Q3 1.9 3 3.1 V5.9 Q3 7.1 4.2 7.1 H8" fill="none" stroke="#f2f2f2" stroke-width="1.3"/><path d="M.4 4.5 L2.6 2.8 V6.2 Z" fill="#f2f2f2"/><path d="M1.6 4.5 H3" stroke="#f2f2f2" stroke-width="1.1"/></svg><span class="t" style="font-size:7.8px;line-height:10px;top:-0.40px;color:#d2d2ce;left:14.20px;transform-origin:0 50%;transform:scaleX(0.8941);text-shadow:.6px .6px 0 rgba(0,0,0,.55);">Branch</span><svg class="a" style="left:5.20px;top:16.20px" width="7.4" height="8.3" viewBox="0 0 8 9"><path d="M1.3 1 H3.9 L7 4.5 L3.9 8 H1.3 Q.9 8 .9 7.6 V1.4 Q.9 1 1.3 1 Z" fill="#ffffff" stroke="#ffffff" stroke-width="0.3"/></svg><span class="t" style="font-size:5.9px;line-height:8px;top:16.90px;color:#dededa;right:14.00px;transform-origin:100% 50%;transform:scaleX(0.9491);">True</span><svg class="a" style="left:73.20px;top:16.20px" width="7.4" height="8.3" viewBox="0 0 8 9"><path d="M1.3 1 H3.9 L7 4.5 L3.9 8 H1.3 Q.9 8 .9 7.6 V1.4 Q.9 1 1.3 1 Z" fill="#ffffff" stroke="#ffffff" stroke-width="0.3"/></svg><svg class="a" style="left:4.00px;top:30.50px" width="11" height="10" viewBox="0 0 11 10"><circle cx="5" cy="5" r="3.0" fill="#b01a20" stroke="#b01a20" stroke-width="0"/><path d="M8.3 3.7 L9.8 5 L8.3 6.3 Z" fill="#b01a20"/></svg><span class="t" style="font-size:5.9px;line-height:8px;top:31.90px;color:#dededa;left:15.80px;transform-origin:0 50%;letter-spacing:0.039px;">Condition</span><span class="t" style="font-size:5.9px;line-height:8px;top:32.60px;color:#dededa;right:14.00px;transform-origin:100% 50%;transform:scaleX(0.9649);">False</span><svg class="a" style="left:73.20px;top:32.00px" width="7.4" height="8.3" viewBox="0 0 8 9"><path d="M1.3 1 H3.9 L7 4.5 L3.9 8 H1.3 Q.9 8 .9 7.6 V1.4 Q.9 1 1.3 1 Z" fill="none" stroke="#ffffff" stroke-width="0.75"/></svg></div>
<div class="node" style="left:480px;top:177px;width:88px;height:46px;"><div class="nt grey" style="height:11px"></div><svg class="a" style="left:4px;top:1px" width="9" height="9" viewBox="0 0 9 9"><path d="M8 1.9 H4.2 Q3 1.9 3 3.1 V5.9 Q3 7.1 4.2 7.1 H8" fill="none" stroke="#f2f2f2" stroke-width="1.3"/><path d="M.4 4.5 L2.6 2.8 V6.2 Z" fill="#f2f2f2"/><path d="M1.6 4.5 H3" stroke="#f2f2f2" stroke-width="1.1"/></svg><span class="t" style="font-size:7.8px;line-height:10px;top:-0.40px;color:#d2d2ce;left:14.20px;transform-origin:0 50%;transform:scaleX(0.8941);text-shadow:.6px .6px 0 rgba(0,0,0,.55);">Branch</span><svg class="a" style="left:5.20px;top:16.20px" width="7.4" height="8.3" viewBox="0 0 8 9"><path d="M1.3 1 H3.9 L7 4.5 L3.9 8 H1.3 Q.9 8 .9 7.6 V1.4 Q.9 1 1.3 1 Z" fill="#ffffff" stroke="#ffffff" stroke-width="0.3"/></svg><span class="t" style="font-size:5.9px;line-height:8px;top:16.90px;color:#dededa;right:14.00px;transform-origin:100% 50%;transform:scaleX(0.9491);">True</span><svg class="a" style="left:73.20px;top:16.20px" width="7.4" height="8.3" viewBox="0 0 8 9"><path d="M1.3 1 H3.9 L7 4.5 L3.9 8 H1.3 Q.9 8 .9 7.6 V1.4 Q.9 1 1.3 1 Z" fill="#ffffff" stroke="#ffffff" stroke-width="0.3"/></svg><svg class="a" style="left:4.00px;top:30.50px" width="11" height="10" viewBox="0 0 11 10"><circle cx="5" cy="5" r="3.0" fill="#b01a20" stroke="#b01a20" stroke-width="0"/><path d="M8.3 3.7 L9.8 5 L8.3 6.3 Z" fill="#b01a20"/></svg><span class="t" style="font-size:5.9px;line-height:8px;top:31.90px;color:#dededa;left:15.80px;transform-origin:0 50%;letter-spacing:0.039px;">Condition</span><span class="t" style="font-size:5.9px;line-height:8px;top:32.60px;color:#dededa;right:14.00px;transform-origin:100% 50%;transform:scaleX(0.9649);">False</span><svg class="a" style="left:73.20px;top:32.00px" width="7.4" height="8.3" viewBox="0 0 8 9"><path d="M1.3 1 H3.9 L7 4.5 L3.9 8 H1.3 Q.9 8 .9 7.6 V1.4 Q.9 1 1.3 1 Z" fill="none" stroke="#ffffff" stroke-width="0.75"/></svg></div>
<div class="compact" style="left:248px;top:241px;width:74px;height:32px;"><svg class="a" style="left:4.40px;top:2.30px" width="11" height="10" viewBox="0 0 11 10"><circle cx="5" cy="5" r="2.65" fill="none" stroke="#1a9fe6" stroke-width="1.1"/></svg><svg class="a" style="left:4.40px;top:17.30px" width="11" height="10" viewBox="0 0 11 10"><circle cx="5" cy="5" r="2.65" fill="none" stroke="#1a9fe6" stroke-width="1.1"/></svg><svg class="a" style="left:57.00px;top:10.30px" width="11" height="10" viewBox="0 0 11 10"><circle cx="5" cy="5" r="2.65" fill="none" stroke="#b8161e" stroke-width="1.1"/></svg><span class="t" style="font-size:11px;line-height:12px;top:9.40px;color:#c6c6be;font-weight:700;left:29.60px;transform-origin:0 50%;letter-spacing:0.141px;">==</span></div>
<div class="node" style="left:64px;top:305px;width:125px;height:32px;"><div class="nt green" style="height:11px"></div><svg class="a" style="left:4.6px;top:1.2px" width="7" height="8" viewBox="0 0 7 8"><path d="M6.2 1.2 Q4.2 .4 3.8 2.4 L2.8 6.4 Q2.4 7.8 .8 7.2 M1.8 3.6 H5.4" fill="none" stroke="#d0e6cc" stroke-width=".9"/></svg><span class="t" style="font-size:8px;line-height:10px;top:0.00px;color:#d6d8d2;font-weight:700;left:13.80px;transform-origin:0 50%;transform:scaleX(0.8261);text-shadow:.6px .6px 0 rgba(0,0,0,.6);">Get Player Pawn</span><svg class="a" style="left:3.80px;top:15.80px" width="11" height="10" viewBox="0 0 11 10"><circle cx="5" cy="5" r="2.65" fill="#0d0d0d" stroke="#4fc44a" stroke-width="1.1"/><path d="M8.3 3.7 L9.8 5 L8.3 6.3 Z" fill="#4fc44a"/></svg><span class="t" style="font-size:5.9px;line-height:8px;top:17.90px;color:#dededa;left:15.80px;transform-origin:0 50%;transform:scaleX(0.9710);">Player Index</span><div class="vbox" style="left:50.7px;top:16.1px;width:9.3px;height:9.8px"></div><span class="t" style="font-size:5.9px;line-height:8px;top:17.20px;color:#b9b9b0;left:53.60px;transform-origin:0 50%;">0</span><span class="t" style="font-size:5.9px;line-height:8px;top:16.30px;color:#dededa;left:73.60px;transform-origin:0 50%;transform:scaleX(0.9719);">Return Value</span><svg class="a" style="left:107.90px;top:14.80px" width="11" height="10" viewBox="0 0 11 10"><circle cx="5" cy="5" r="3.0" fill="#1a9fe6" stroke="#1a9fe6" stroke-width="0"/><path d="M8.3 3.7 L9.8 5 L8.3 6.3 Z" fill="#1a9fe6"/></svg></div>
<div class="varn" style="left:314px;top:274px;width:66px;height:18px;"><span class="t" style="font-size:6.1px;line-height:8px;top:5.00px;color:#e4e4e0;left:8.50px;transform-origin:0 50%;transform:scaleX(0.9909);">MS AMB Plain</span><svg class="a" style="left:47.60px;top:3.70px" width="11" height="10" viewBox="0 0 11 10"><circle cx="5" cy="5" r="3.0" fill="#1a9fe6" stroke="#1a9fe6" stroke-width="0"/><path d="M8.3 3.7 L9.8 5 L8.3 6.3 Z" fill="#1a9fe6"/></svg></div>
<div class="node" style="left:424px;top:305px;width:102px;height:38px;"><div class="nt green" style="height:22px"></div><svg class="a" style="left:5px;top:1.4px" width="7" height="8" viewBox="0 0 7 8"><path d="M6.2 1.2 Q4.2 .4 3.8 2.4 L2.8 6.4 Q2.4 7.8 .8 7.2 M1.8 3.6 H5.4" fill="none" stroke="#d0e6cc" stroke-width=".9"/></svg><span class="t" style="font-size:8px;line-height:10px;top:-0.40px;color:#d6d8d2;font-weight:700;left:13.60px;transform-origin:0 50%;transform:scaleX(0.8539);text-shadow:.6px .6px 0 rgba(0,0,0,.6);">Is Playing</span><span class="t" style="font-size:5.9px;line-height:8px;top:11.00px;color:#9fb07a;font-style:italic;left:14.60px;transform-origin:0 50%;transform:scaleX(0.9542);">Target is Audio Component</span><svg class="a" style="left:2.80px;top:23.00px" width="11" height="10" viewBox="0 0 11 10"><circle cx="5" cy="5" r="3.0" fill="#1a9fe6" stroke="#1a9fe6" stroke-width="0"/><path d="M8.3 3.7 L9.8 5 L8.3 6.3 Z" fill="#1a9fe6"/></svg><span class="t" style="font-size:5.9px;line-height:8px;top:24.70px;color:#dededa;left:15.80px;transform-origin:0 50%;transform:scaleX(0.9954);">Target</span><span class="t" style="font-size:5.9px;line-height:8px;top:24.50px;color:#dededa;left:50.40px;transform-origin:0 50%;transform:scaleX(0.9572);">Return Value</span><svg class="a" style="left:83.50px;top:23.00px" width="11" height="10" viewBox="0 0 11 10"><circle cx="5" cy="5" r="3.0" fill="#b01a20" stroke="#b01a20" stroke-width="0"/><path d="M8.3 3.7 L9.8 5 L8.3 6.3 Z" fill="#b01a20"/></svg></div>
<div class="varn" style="left:536px;top:249px;width:66px;height:18px;"><span class="t" style="font-size:6.1px;line-height:8px;top:5.00px;color:#e4e4e0;left:8.50px;transform-origin:0 50%;transform:scaleX(0.9909);">MS AMB Plain</span><svg class="a" style="left:47.60px;top:3.70px" width="11" height="10" viewBox="0 0 11 10"><circle cx="5" cy="5" r="3.0" fill="#1a9fe6" stroke="#1a9fe6" stroke-width="0"/><path d="M8.3 3.7 L9.8 5 L8.3 6.3 Z" fill="#1a9fe6"/></svg></div>
<div class="node" style="left:624px;top:185px;width:109px;height:81px;"><div class="nt blue" style="height:19px"></div><svg class="a" style="left:5.4px;top:1.6px" width="7" height="8" viewBox="0 0 7 8"><path d="M6.2 1.2 Q4.2 .4 3.8 2.4 L2.8 6.4 Q2.4 7.8 .8 7.2 M1.8 3.6 H5.4" fill="none" stroke="#74c0f0" stroke-width=".9"/></svg><span class="t" style="font-size:8px;line-height:10px;top:0.00px;color:#d4d6d4;font-weight:700;left:13.60px;transform-origin:0 50%;transform:scaleX(0.8335);text-shadow:.6px .6px 0 rgba(0,0,0,.6);">Fade Out</span><span class="t" style="font-size:5.9px;line-height:8px;top:10.90px;color:#a3a57e;font-style:italic;left:14.40px;transform-origin:0 50%;transform:scaleX(0.9584);">Target is Audio Component</span><svg class="a" style="left:5.00px;top:24.90px" width="7.4" height="8.3" viewBox="0 0 8 9"><path d="M1.3 1 H3.9 L7 4.5 L3.9 8 H1.3 Q.9 8 .9 7.6 V1.4 Q.9 1 1.3 1 Z" fill="#ffffff" stroke="#ffffff" stroke-width="0.3"/></svg><svg class="a" style="left:93.90px;top:24.90px" width="7.4" height="8.3" viewBox="0 0 8 9"><path d="M1.3 1 H3.9 L7 4.5 L3.9 8 H1.3 Q.9 8 .9 7.6 V1.4 Q.9 1 1.3 1 Z" fill="#ffffff" stroke="#ffffff" stroke-width="0.3"/></svg><svg class="a" style="left:3.60px;top:39.30px" width="11" height="10" viewBox="0 0 11 10"><circle cx="5" cy="5" r="3.0" fill="#1a9fe6" stroke="#1a9fe6" stroke-width="0"/><path d="M8.3 3.7 L9.8 5 L8.3 6.3 Z" fill="#1a9fe6"/></svg><span class="t" style="font-size:5.9px;line-height:8px;top:41.00px;color:#dededa;left:15.60px;transform-origin:0 50%;letter-spacing:0.105px;">Target</span><svg class="a" style="left:3.60px;top:55.30px" width="11" height="10" viewBox="0 0 11 10"><rect x="1.6" y="2.6" width="6.4" height="4.8" rx="2.4" fill="#0d0d0d" stroke="#4fc44a" stroke-width="1.1"/><path d="M8.5 3.8 L9.9 5 L8.5 6.2 Z" fill="#4fc44a"/></svg><span class="t" style="font-size:5.9px;line-height:8px;top:56.80px;color:#dededa;left:15.60px;transform-origin:0 50%;transform:scaleX(0.9243);">Fade Out Duration</span><div class="vbox" style="left:64.0px;top:55.7px;width:14.5px;height:9.9px"></div><span class="t" style="font-size:6.4px;line-height:8px;top:56.70px;color:#b9b9b0;left:67.00px;transform-origin:0 50%;transform:scaleX(0.9223);">3,0</span><svg class="a" style="left:51.40px;top:72.35px" width="6.4" height="4.5" viewBox="0 0 6.4 4.5"><path d="M1 1 L3.2 3.5 L5.4 1" fill="none" stroke="#e6e6e6" stroke-width="1.1"/></svg></div>
<div class="node" style="left:776px;top:193px;width:105px;height:81px;"><div class="nt blue" style="height:19px"></div><svg class="a" style="left:5.4px;top:1.6px" width="7" height="8" viewBox="0 0 7 8"><path d="M6.2 1.2 Q4.2 .4 3.8 2.4 L2.8 6.4 Q2.4 7.8 .8 7.2 M1.8 3.6 H5.4" fill="none" stroke="#74c0f0" stroke-width=".9"/></svg><span class="t" style="font-size:8px;line-height:10px;top:0.00px;color:#d4d6d4;font-weight:700;left:13.60px;transform-origin:0 50%;transform:scaleX(0.8602);text-shadow:.6px .6px 0 rgba(0,0,0,.6);">Fade In</span><span class="t" style="font-size:5.9px;line-height:8px;top:10.90px;color:#a3a57e;font-style:italic;left:14.40px;transform-origin:0 50%;transform:scaleX(0.9542);">Target is Audio Component</span><svg class="a" style="left:5.00px;top:24.90px" width="7.4" height="8.3" viewBox="0 0 8 9"><path d="M1.3 1 H3.9 L7 4.5 L3.9 8 H1.3 Q.9 8 .9 7.6 V1.4 Q.9 1 1.3 1 Z" fill="#ffffff" stroke="#ffffff" stroke-width="0.3"/></svg><svg class="a" style="left:90.20px;top:24.90px" width="7.4" height="8.3" viewBox="0 0 8 9"><path d="M1.3 1 H3.9 L7 4.5 L3.9 8 H1.3 Q.9 8 .9 7.6 V1.4 Q.9 1 1.3 1 Z" fill="#ffffff" stroke="#ffffff" stroke-width="0.3"/></svg><svg class="a" style="left:3.60px;top:39.30px" width="11" height="10" viewBox="0 0 11 10"><circle cx="5" cy="5" r="3.0" fill="#1a9fe6" stroke="#1a9fe6" stroke-width="0"/><path d="M8.3 3.7 L9.8 5 L8.3 6.3 Z" fill="#1a9fe6"/></svg><span class="t" style="font-size:5.9px;line-height:8px;top:41.00px;color:#dededa;left:15.60px;transform-origin:0 50%;letter-spacing:0.105px;">Target</span><svg class="a" style="left:3.60px;top:55.30px" width="11" height="10" viewBox="0 0 11 10"><rect x="1.6" y="2.6" width="6.4" height="4.8" rx="2.4" fill="#0d0d0d" stroke="#4fc44a" stroke-width="1.1"/><path d="M8.5 3.8 L9.9 5 L8.5 6.2 Z" fill="#4fc44a"/></svg><span class="t" style="font-size:5.9px;line-height:8px;top:56.80px;color:#dededa;left:15.60px;transform-origin:0 50%;transform:scaleX(0.9458);">Fade in Duration</span><div class="vbox" style="left:60.3px;top:55.7px;width:14.5px;height:9.9px"></div><span class="t" style="font-size:6.4px;line-height:8px;top:56.70px;color:#b9b9b0;left:63.30px;transform-origin:0 50%;transform:scaleX(0.9223);">3,0</span><svg class="a" style="left:49.30px;top:72.35px" width="6.4" height="4.5" viewBox="0 0 6.4 4.5"><path d="M1 1 L3.2 3.5 L5.4 1" fill="none" stroke="#e6e6e6" stroke-width="1.1"/></svg></div>
<div class="varn" style="left:720px;top:305px;width:68px;height:18px;"><span class="t" style="font-size:6.1px;line-height:8px;top:5.00px;color:#e4e4e0;left:9.30px;transform-origin:0 50%;transform:scaleX(0.9280);">MS AMB Forest</span><svg class="a" style="left:49.60px;top:3.70px" width="11" height="10" viewBox="0 0 11 10"><circle cx="5" cy="5" r="3.0" fill="#1a9fe6" stroke="#1a9fe6" stroke-width="0"/><path d="M8.3 3.7 L9.8 5 L8.3 6.3 Z" fill="#1a9fe6"/></svg></div>
<div class="node" style="left:936px;top:201px;width:118px;height:78px;"><div class="nt blue" style="height:19px"></div><svg class="a" style="left:5.4px;top:1.6px" width="7" height="8" viewBox="0 0 7 8"><path d="M6.2 1.2 Q4.2 .4 3.8 2.4 L2.8 6.4 Q2.4 7.8 .8 7.2 M1.8 3.6 H5.4" fill="none" stroke="#74c0f0" stroke-width=".9"/></svg><span class="t" style="font-size:8px;line-height:10px;top:0.00px;color:#d4d6d4;font-weight:700;left:13.40px;transform-origin:0 50%;transform:scaleX(0.8062);text-shadow:.6px .6px 0 rgba(0,0,0,.6);">Set State</span><span class="t" style="font-size:5.9px;line-height:8px;top:10.90px;color:#a3a57e;font-style:italic;left:14.60px;transform-origin:0 50%;transform:scaleX(0.9595);">Target is Soundscape Subsystem</span><svg class="a" style="left:4.90px;top:24.60px" width="7.4" height="8.3" viewBox="0 0 8 9"><path d="M1.3 1 H3.9 L7 4.5 L3.9 8 H1.3 Q.9 8 .9 7.6 V1.4 Q.9 1 1.3 1 Z" fill="#ffffff" stroke="#ffffff" stroke-width="0.3"/></svg><svg class="a" style="left:102.70px;top:24.60px" width="7.4" height="8.3" viewBox="0 0 8 9"><path d="M1.3 1 H3.9 L7 4.5 L3.9 8 H1.3 Q.9 8 .9 7.6 V1.4 Q.9 1 1.3 1 Z" fill="#ffffff" stroke="#ffffff" stroke-width="0.3"/></svg><svg class="a" style="left:3.60px;top:39.30px" width="11" height="10" viewBox="0 0 11 10"><circle cx="5" cy="5" r="3.0" fill="#1a9fe6" stroke="#1a9fe6" stroke-width="0"/><path d="M8.3 3.7 L9.8 5 L8.3 6.3 Z" fill="#1a9fe6"/></svg><span class="t" style="font-size:5.9px;line-height:8px;top:41.20px;color:#dededa;left:15.80px;transform-origin:0 50%;letter-spacing:0.085px;">Target</span><svg class="a" style="left:3.60px;top:58.80px" width="11" height="10" viewBox="0 0 11 10"><circle cx="5" cy="5" r="2.65" fill="#0d0d0d" stroke="#3f7193" stroke-width="1.1"/><path d="M8.3 3.7 L9.8 5 L8.3 6.3 Z" fill="#3f7193"/></svg><span class="t" style="font-size:5.9px;line-height:8px;top:55.80px;color:#dededa;left:15.80px;transform-origin:0 50%;transform:scaleX(0.9594);">Soundscape State</span><div class="chip" style="left:19px;top:64.2px;width:36.3px;height:7.6px"></div><span class="t" style="font-size:5px;line-height:8px;top:64.10px;color:#e0e0dc;left:21.80px;transform-origin:0 50%;transform:scaleX(0.8350);">Forest_01</span><svg class="a" style="left:46.9px;top:65.8px" width="4.6" height="4.6" viewBox="0 0 4.6 4.6"><path d="M.5 .5 L4.1 4.1 M4.1 .5 L.5 4.1" stroke="#e8e8e8" stroke-width=".8"/></svg><svg class="a" style="left:57.10px;top:66.20px" width="5.6" height="4" viewBox="0 0 5.6 4"><path d="M1 1 L2.8 3 L4.6 1" fill="none" stroke="#dcdcdc" stroke-width="0.8"/></svg></div>
<div class="node" style="left:1105px;top:201px;width:117px;height:78px;"><div class="nt blue" style="height:19px"></div><svg class="a" style="left:5.4px;top:1.6px" width="7" height="8" viewBox="0 0 7 8"><path d="M6.2 1.2 Q4.2 .4 3.8 2.4 L2.8 6.4 Q2.4 7.8 .8 7.2 M1.8 3.6 H5.4" fill="none" stroke="#74c0f0" stroke-width=".9"/></svg><span class="t" style="font-size:8px;line-height:10px;top:0.00px;color:#d4d6d4;font-weight:700;left:13.40px;transform-origin:0 50%;transform:scaleX(0.7991);text-shadow:.6px .6px 0 rgba(0,0,0,.6);">Clear State</span><span class="t" style="font-size:5.9px;line-height:8px;top:10.90px;color:#a3a57e;font-style:italic;left:14.60px;transform-origin:0 50%;transform:scaleX(0.9595);">Target is Soundscape Subsystem</span><svg class="a" style="left:4.90px;top:24.60px" width="7.4" height="8.3" viewBox="0 0 8 9"><path d="M1.3 1 H3.9 L7 4.5 L3.9 8 H1.3 Q.9 8 .9 7.6 V1.4 Q.9 1 1.3 1 Z" fill="#ffffff" stroke="#ffffff" stroke-width="0.3"/></svg><svg class="a" style="left:102.70px;top:24.60px" width="7.4" height="8.3" viewBox="0 0 8 9"><path d="M1.3 1 H3.9 L7 4.5 L3.9 8 H1.3 Q.9 8 .9 7.6 V1.4 Q.9 1 1.3 1 Z" fill="none" stroke="#ffffff" stroke-width="0.75"/></svg><svg class="a" style="left:3.60px;top:39.30px" width="11" height="10" viewBox="0 0 11 10"><circle cx="5" cy="5" r="3.0" fill="#1a9fe6" stroke="#1a9fe6" stroke-width="0"/><path d="M8.3 3.7 L9.8 5 L8.3 6.3 Z" fill="#1a9fe6"/></svg><span class="t" style="font-size:5.9px;line-height:8px;top:41.20px;color:#dededa;left:15.80px;transform-origin:0 50%;letter-spacing:0.085px;">Target</span><svg class="a" style="left:3.60px;top:58.80px" width="11" height="10" viewBox="0 0 11 10"><circle cx="5" cy="5" r="2.65" fill="#0d0d0d" stroke="#3f7193" stroke-width="1.1"/><path d="M8.3 3.7 L9.8 5 L8.3 6.3 Z" fill="#3f7193"/></svg><span class="t" style="font-size:5.9px;line-height:8px;top:55.80px;color:#dededa;left:15.80px;transform-origin:0 50%;transform:scaleX(0.9594);">Soundscape State</span><div class="chip" style="left:19px;top:64.2px;width:23.8px;height:7.6px"></div><span class="t" style="font-size:5px;line-height:8px;top:64.10px;color:#e0e0dc;left:21.80px;transform-origin:0 50%;transform:scaleX(0.9618);">Plain</span><svg class="a" style="left:34.4px;top:65.8px" width="4.6" height="4.6" viewBox="0 0 4.6 4.6"><path d="M.5 .5 L4.1 4.1 M4.1 .5 L.5 4.1" stroke="#e8e8e8" stroke-width=".8"/></svg><svg class="a" style="left:44.60px;top:66.20px" width="5.6" height="4" viewBox="0 0 5.6 4"><path d="M1 1 L2.8 3 L4.6 1" fill="none" stroke="#dcdcdc" stroke-width="0.8"/></svg></div>
<div class="a" style="left:792px;top:346px;width:109px;height:32px;border:1px solid rgba(20,20,18,.85);border-radius:6px;background:linear-gradient(to bottom,rgba(48,50,44,.42),rgba(24,25,21,.46));box-shadow:0 1px 2.5px rgba(0,0,0,.45);"><span class="t" style="font-size:12.5px;line-height:13px;top:0.70px;color:#c9c9c2;font-weight:700;left:22.30px;transform-origin:0 50%;transform:scaleX(0.8113);">Soundscape</span><span class="t" style="font-size:12.5px;line-height:13px;top:15.70px;color:#c9c9c2;font-weight:700;left:22.30px;transform-origin:0 50%;transform:scaleX(0.8320);">Subsystem</span><svg class="a" style="left:92.00px;top:9.40px" width="11" height="10" viewBox="0 0 11 10"><circle cx="5" cy="5" r="3.0" fill="#1a9fe6" stroke="#1a9fe6" stroke-width="0"/><path d="M8.3 3.7 L9.8 5 L8.3 6.3 Z" fill="#1a9fe6"/></svg></div>
<div class="node" style="left:16px;top:394px;width:173px;height:90px;"><div class="nt red" style="height:11px"></div><svg class="a" style="left:4px;top:1.9px" width="8" height="8" viewBox="0 0 9 9"><path d="M4.6 .8 L8.3 4.5 L4.6 8.2 L.9 4.5 Z" fill="#5c0a10" stroke="#efe3e6" stroke-width="1.05"/><path d="M.2 4.5 L2.6 2.9 V6.1 Z" fill="#efe3e6"/><path d="M2 4.5 H4.6" stroke="#efe3e6" stroke-width="1"/></svg><span class="t" style="font-size:8px;line-height:10px;top:0.60px;color:#e6dede;font-weight:700;left:13.20px;transform-origin:0 50%;transform:scaleX(0.8150);text-shadow:.6px .6px 0 rgba(40,0,0,.8);">On Component End Overlap (Box_Forest_01)</span><div class="a" style="left:161.70px;top:3px;width:6px;height:5px;background:#1c0506;border:1px solid #b8161f"></div><svg class="a" style="left:158.80px;top:18.40px" width="7.4" height="8.3" viewBox="0 0 8 9"><path d="M1.3 1 H3.9 L7 4.5 L3.9 8 H1.3 Q.9 8 .9 7.6 V1.4 Q.9 1 1.3 1 Z" fill="#ffffff" stroke="#ffffff" stroke-width="0.3"/></svg><span class="t" style="font-size:5.9px;line-height:8px;top:33.70px;color:#dededa;right:15.50px;transform-origin:100% 50%;transform:scaleX(0.9385);">Overlapped Component</span><svg class="a" style="left:155.70px;top:32.00px" width="11" height="10" viewBox="0 0 11 10"><circle cx="5" cy="5" r="2.65" fill="#0d0d0d" stroke="#1a9fe6" stroke-width="1.1"/><path d="M8.3 3.7 L9.8 5 L8.3 6.3 Z" fill="#1a9fe6"/></svg><span class="t" style="font-size:5.9px;line-height:8px;top:48.75px;color:#dededa;right:15.50px;transform-origin:100% 50%;transform:scaleX(0.9867);">Other Actor</span><svg class="a" style="left:155.70px;top:47.05px" width="11" height="10" viewBox="0 0 11 10"><circle cx="5" cy="5" r="3.0" fill="#1a9fe6" stroke="#1a9fe6" stroke-width="0"/><path d="M8.3 3.7 L9.8 5 L8.3 6.3 Z" fill="#1a9fe6"/></svg><span class="t" style="font-size:5.9px;line-height:8px;top:63.80px;color:#dededa;right:15.50px;transform-origin:100% 50%;transform:scaleX(0.9472);">Other Comp</span><svg class="a" style="left:155.70px;top:62.10px" width="11" height="10" viewBox="0 0 11 10"><circle cx="5" cy="5" r="2.65" fill="#0d0d0d" stroke="#1a9fe6" stroke-width="1.1"/><path d="M8.3 3.7 L9.8 5 L8.3 6.3 Z" fill="#1a9fe6"/></svg><span class="t" style="font-size:5.9px;line-height:8px;top:78.85px;color:#dededa;right:15.50px;transform-origin:100% 50%;transform:scaleX(0.9401);">Other Body Index</span><svg class="a" style="left:155.70px;top:77.15px" width="11" height="10" viewBox="0 0 11 10"><circle cx="5" cy="5" r="2.65" fill="#0d0d0d" stroke="#4fc44a" stroke-width="1.1"/><path d="M8.3 3.7 L9.8 5 L8.3 6.3 Z" fill="#4fc44a"/></svg></div>
<div class="node" style="left:376px;top:377px;width:88px;height:47px;"><div class="nt grey" style="height:11px"></div><svg class="a" style="left:4px;top:1px" width="9" height="9" viewBox="0 0 9 9"><path d="M8 1.9 H4.2 Q3 1.9 3 3.1 V5.9 Q3 7.1 4.2 7.1 H8" fill="none" stroke="#f2f2f2" stroke-width="1.3"/><path d="M.4 4.5 L2.6 2.8 V6.2 Z" fill="#f2f2f2"/><path d="M1.6 4.5 H3" stroke="#f2f2f2" stroke-width="1.1"/></svg><span class="t" style="font-size:7.8px;line-height:10px;top:-0.40px;color:#d2d2ce;left:14.20px;transform-origin:0 50%;transform:scaleX(0.8941);text-shadow:.6px .6px 0 rgba(0,0,0,.55);">Branch</span><svg class="a" style="left:5.20px;top:16.20px" width="7.4" height="8.3" viewBox="0 0 8 9"><path d="M1.3 1 H3.9 L7 4.5 L3.9 8 H1.3 Q.9 8 .9 7.6 V1.4 Q.9 1 1.3 1 Z" fill="#ffffff" stroke="#ffffff" stroke-width="0.3"/></svg><span class="t" style="font-size:5.9px;line-height:8px;top:16.90px;color:#dededa;right:14.00px;transform-origin:100% 50%;transform:scaleX(0.9491);">True</span><svg class="a" style="left:73.20px;top:16.20px" width="7.4" height="8.3" viewBox="0 0 8 9"><path d="M1.3 1 H3.9 L7 4.5 L3.9 8 H1.3 Q.9 8 .9 7.6 V1.4 Q.9 1 1.3 1 Z" fill="#ffffff" stroke="#ffffff" stroke-width="0.3"/></svg><svg class="a" style="left:4.00px;top:30.50px" width="11" height="10" viewBox="0 0 11 10"><circle cx="5" cy="5" r="3.0" fill="#b01a20" stroke="#b01a20" stroke-width="0"/><path d="M8.3 3.7 L9.8 5 L8.3 6.3 Z" fill="#b01a20"/></svg><span class="t" style="font-size:5.9px;line-height:8px;top:31.90px;color:#dededa;left:15.80px;transform-origin:0 50%;letter-spacing:0.039px;">Condition</span><span class="t" style="font-size:5.9px;line-height:8px;top:32.60px;color:#dededa;right:14.00px;transform-origin:100% 50%;transform:scaleX(0.9649);">False</span><svg class="a" style="left:73.20px;top:32.00px" width="7.4" height="8.3" viewBox="0 0 8 9"><path d="M1.3 1 H3.9 L7 4.5 L3.9 8 H1.3 Q.9 8 .9 7.6 V1.4 Q.9 1 1.3 1 Z" fill="none" stroke="#ffffff" stroke-width="0.75"/></svg></div>
<div class="node" style="left:512px;top:377px;width:88px;height:47px;"><div class="nt grey" style="height:11px"></div><svg class="a" style="left:4px;top:1px" width="9" height="9" viewBox="0 0 9 9"><path d="M8 1.9 H4.2 Q3 1.9 3 3.1 V5.9 Q3 7.1 4.2 7.1 H8" fill="none" stroke="#f2f2f2" stroke-width="1.3"/><path d="M.4 4.5 L2.6 2.8 V6.2 Z" fill="#f2f2f2"/><path d="M1.6 4.5 H3" stroke="#f2f2f2" stroke-width="1.1"/></svg><span class="t" style="font-size:7.8px;line-height:10px;top:-0.40px;color:#d2d2ce;left:14.20px;transform-origin:0 50%;transform:scaleX(0.8941);text-shadow:.6px .6px 0 rgba(0,0,0,.55);">Branch</span><svg class="a" style="left:5.20px;top:16.20px" width="7.4" height="8.3" viewBox="0 0 8 9"><path d="M1.3 1 H3.9 L7 4.5 L3.9 8 H1.3 Q.9 8 .9 7.6 V1.4 Q.9 1 1.3 1 Z" fill="#ffffff" stroke="#ffffff" stroke-width="0.3"/></svg><span class="t" style="font-size:5.9px;line-height:8px;top:16.90px;color:#dededa;right:14.00px;transform-origin:100% 50%;transform:scaleX(0.9491);">True</span><svg class="a" style="left:73.20px;top:16.20px" width="7.4" height="8.3" viewBox="0 0 8 9"><path d="M1.3 1 H3.9 L7 4.5 L3.9 8 H1.3 Q.9 8 .9 7.6 V1.4 Q.9 1 1.3 1 Z" fill="#ffffff" stroke="#ffffff" stroke-width="0.3"/></svg><svg class="a" style="left:4.00px;top:30.50px" width="11" height="10" viewBox="0 0 11 10"><circle cx="5" cy="5" r="3.0" fill="#b01a20" stroke="#b01a20" stroke-width="0"/><path d="M8.3 3.7 L9.8 5 L8.3 6.3 Z" fill="#b01a20"/></svg><span class="t" style="font-size:5.9px;line-height:8px;top:31.90px;color:#dededa;left:15.80px;transform-origin:0 50%;letter-spacing:0.039px;">Condition</span><span class="t" style="font-size:5.9px;line-height:8px;top:32.60px;color:#dededa;right:14.00px;transform-origin:100% 50%;transform:scaleX(0.9649);">False</span><svg class="a" style="left:73.20px;top:32.00px" width="7.4" height="8.3" viewBox="0 0 8 9"><path d="M1.3 1 H3.9 L7 4.5 L3.9 8 H1.3 Q.9 8 .9 7.6 V1.4 Q.9 1 1.3 1 Z" fill="none" stroke="#ffffff" stroke-width="0.75"/></svg></div>
<div class="compact" style="left:280px;top:441px;width:74px;height:32px;"><svg class="a" style="left:4.40px;top:2.30px" width="11" height="10" viewBox="0 0 11 10"><circle cx="5" cy="5" r="2.65" fill="none" stroke="#1a9fe6" stroke-width="1.1"/></svg><svg class="a" style="left:4.40px;top:17.30px" width="11" height="10" viewBox="0 0 11 10"><circle cx="5" cy="5" r="2.65" fill="none" stroke="#1a9fe6" stroke-width="1.1"/></svg><svg class="a" style="left:57.00px;top:10.30px" width="11" height="10" viewBox="0 0 11 10"><circle cx="5" cy="5" r="2.65" fill="none" stroke="#b8161e" stroke-width="1.1"/></svg><span class="t" style="font-size:11px;line-height:12px;top:9.40px;color:#c6c6be;font-weight:700;left:29.60px;transform-origin:0 50%;letter-spacing:0.141px;">==</span></div>
<div class="node" style="left:88px;top:521px;width:125px;height:33px;"><div class="nt green" style="height:11px"></div><svg class="a" style="left:4.6px;top:1.2px" width="7" height="8" viewBox="0 0 7 8"><path d="M6.2 1.2 Q4.2 .4 3.8 2.4 L2.8 6.4 Q2.4 7.8 .8 7.2 M1.8 3.6 H5.4" fill="none" stroke="#d0e6cc" stroke-width=".9"/></svg><span class="t" style="font-size:8px;line-height:10px;top:0.00px;color:#d6d8d2;font-weight:700;left:13.80px;transform-origin:0 50%;transform:scaleX(0.8261);text-shadow:.6px .6px 0 rgba(0,0,0,.6);">Get Player Pawn</span><svg class="a" style="left:3.80px;top:15.80px" width="11" height="10" viewBox="0 0 11 10"><circle cx="5" cy="5" r="2.65" fill="#0d0d0d" stroke="#4fc44a" stroke-width="1.1"/><path d="M8.3 3.7 L9.8 5 L8.3 6.3 Z" fill="#4fc44a"/></svg><span class="t" style="font-size:5.9px;line-height:8px;top:17.90px;color:#dededa;left:15.80px;transform-origin:0 50%;transform:scaleX(0.9710);">Player Index</span><div class="vbox" style="left:50.7px;top:16.1px;width:9.3px;height:9.8px"></div><span class="t" style="font-size:5.9px;line-height:8px;top:17.20px;color:#b9b9b0;left:53.60px;transform-origin:0 50%;">0</span><span class="t" style="font-size:5.9px;line-height:8px;top:16.30px;color:#dededa;left:73.60px;transform-origin:0 50%;transform:scaleX(0.9719);">Return Value</span><svg class="a" style="left:107.90px;top:14.80px" width="11" height="10" viewBox="0 0 11 10"><circle cx="5" cy="5" r="3.0" fill="#1a9fe6" stroke="#1a9fe6" stroke-width="0"/><path d="M8.3 3.7 L9.8 5 L8.3 6.3 Z" fill="#1a9fe6"/></svg></div>
<div class="varn" style="left:320px;top:529px;width:68px;height:18px;"><span class="t" style="font-size:6.1px;line-height:8px;top:5.00px;color:#e4e4e0;left:9.30px;transform-origin:0 50%;transform:scaleX(0.9280);">MS AMB Forest</span><svg class="a" style="left:49.60px;top:3.70px" width="11" height="10" viewBox="0 0 11 10"><circle cx="5" cy="5" r="3.0" fill="#1a9fe6" stroke="#1a9fe6" stroke-width="0"/><path d="M8.3 3.7 L9.8 5 L8.3 6.3 Z" fill="#1a9fe6"/></svg></div>
<div class="node" style="left:456px;top:505px;width:102px;height:38px;"><div class="nt green" style="height:22px"></div><svg class="a" style="left:5px;top:1.4px" width="7" height="8" viewBox="0 0 7 8"><path d="M6.2 1.2 Q4.2 .4 3.8 2.4 L2.8 6.4 Q2.4 7.8 .8 7.2 M1.8 3.6 H5.4" fill="none" stroke="#d0e6cc" stroke-width=".9"/></svg><span class="t" style="font-size:8px;line-height:10px;top:-0.40px;color:#d6d8d2;font-weight:700;left:13.60px;transform-origin:0 50%;transform:scaleX(0.8539);text-shadow:.6px .6px 0 rgba(0,0,0,.6);">Is Playing</span><span class="t" style="font-size:5.9px;line-height:8px;top:11.00px;color:#9fb07a;font-style:italic;left:14.60px;transform-origin:0 50%;transform:scaleX(0.9542);">Target is Audio Component</span><svg class="a" style="left:2.80px;top:23.00px" width="11" height="10" viewBox="0 0 11 10"><circle cx="5" cy="5" r="3.0" fill="#1a9fe6" stroke="#1a9fe6" stroke-width="0"/><path d="M8.3 3.7 L9.8 5 L8.3 6.3 Z" fill="#1a9fe6"/></svg><span class="t" style="font-size:5.9px;line-height:8px;top:24.70px;color:#dededa;left:15.80px;transform-origin:0 50%;transform:scaleX(0.9954);">Target</span><span class="t" style="font-size:5.9px;line-height:8px;top:24.50px;color:#dededa;left:50.40px;transform-origin:0 50%;transform:scaleX(0.9572);">Return Value</span><svg class="a" style="left:83.50px;top:23.00px" width="11" height="10" viewBox="0 0 11 10"><circle cx="5" cy="5" r="3.0" fill="#b01a20" stroke="#b01a20" stroke-width="0"/><path d="M8.3 3.7 L9.8 5 L8.3 6.3 Z" fill="#b01a20"/></svg></div>
<div class="varn" style="left:536px;top:457px;width:68px;height:18px;"><span class="t" style="font-size:6.1px;line-height:8px;top:5.00px;color:#e4e4e0;left:9.30px;transform-origin:0 50%;transform:scaleX(0.9280);">MS AMB Forest</span><svg class="a" style="left:49.60px;top:3.70px" width="11" height="10" viewBox="0 0 11 10"><circle cx="5" cy="5" r="3.0" fill="#1a9fe6" stroke="#1a9fe6" stroke-width="0"/><path d="M8.3 3.7 L9.8 5 L8.3 6.3 Z" fill="#1a9fe6"/></svg></div>
<div class="node" style="left:656px;top:386px;width:109px;height:80px;"><div class="nt blue" style="height:19px"></div><svg class="a" style="left:5.4px;top:1.6px" width="7" height="8" viewBox="0 0 7 8"><path d="M6.2 1.2 Q4.2 .4 3.8 2.4 L2.8 6.4 Q2.4 7.8 .8 7.2 M1.8 3.6 H5.4" fill="none" stroke="#74c0f0" stroke-width=".9"/></svg><span class="t" style="font-size:8px;line-height:10px;top:0.00px;color:#d4d6d4;font-weight:700;left:13.60px;transform-origin:0 50%;transform:scaleX(0.8335);text-shadow:.6px .6px 0 rgba(0,0,0,.6);">Fade Out</span><span class="t" style="font-size:5.9px;line-height:8px;top:10.90px;color:#a3a57e;font-style:italic;left:14.40px;transform-origin:0 50%;transform:scaleX(0.9584);">Target is Audio Component</span><svg class="a" style="left:5.00px;top:24.90px" width="7.4" height="8.3" viewBox="0 0 8 9"><path d="M1.3 1 H3.9 L7 4.5 L3.9 8 H1.3 Q.9 8 .9 7.6 V1.4 Q.9 1 1.3 1 Z" fill="#ffffff" stroke="#ffffff" stroke-width="0.3"/></svg><svg class="a" style="left:93.90px;top:24.90px" width="7.4" height="8.3" viewBox="0 0 8 9"><path d="M1.3 1 H3.9 L7 4.5 L3.9 8 H1.3 Q.9 8 .9 7.6 V1.4 Q.9 1 1.3 1 Z" fill="#ffffff" stroke="#ffffff" stroke-width="0.3"/></svg><svg class="a" style="left:3.60px;top:39.30px" width="11" height="10" viewBox="0 0 11 10"><circle cx="5" cy="5" r="3.0" fill="#1a9fe6" stroke="#1a9fe6" stroke-width="0"/><path d="M8.3 3.7 L9.8 5 L8.3 6.3 Z" fill="#1a9fe6"/></svg><span class="t" style="font-size:5.9px;line-height:8px;top:41.00px;color:#dededa;left:15.60px;transform-origin:0 50%;letter-spacing:0.105px;">Target</span><svg class="a" style="left:3.60px;top:55.30px" width="11" height="10" viewBox="0 0 11 10"><rect x="1.6" y="2.6" width="6.4" height="4.8" rx="2.4" fill="#0d0d0d" stroke="#4fc44a" stroke-width="1.1"/><path d="M8.5 3.8 L9.9 5 L8.5 6.2 Z" fill="#4fc44a"/></svg><span class="t" style="font-size:5.9px;line-height:8px;top:56.80px;color:#dededa;left:15.60px;transform-origin:0 50%;transform:scaleX(0.9243);">Fade Out Duration</span><div class="vbox" style="left:64.0px;top:55.7px;width:14.5px;height:9.9px"></div><span class="t" style="font-size:6.4px;line-height:8px;top:56.70px;color:#b9b9b0;left:67.00px;transform-origin:0 50%;transform:scaleX(0.9223);">3,0</span><svg class="a" style="left:51.40px;top:72.35px" width="6.4" height="4.5" viewBox="0 0 6.4 4.5"><path d="M1 1 L3.2 3.5 L5.4 1" fill="none" stroke="#e6e6e6" stroke-width="1.1"/></svg></div>
<div class="node" style="left:808px;top:393px;width:105px;height:81px;"><div class="nt blue" style="height:19px"></div><svg class="a" style="left:5.4px;top:1.6px" width="7" height="8" viewBox="0 0 7 8"><path d="M6.2 1.2 Q4.2 .4 3.8 2.4 L2.8 6.4 Q2.4 7.8 .8 7.2 M1.8 3.6 H5.4" fill="none" stroke="#74c0f0" stroke-width=".9"/></svg><span class="t" style="font-size:8px;line-height:10px;top:0.00px;color:#d4d6d4;font-weight:700;left:13.60px;transform-origin:0 50%;transform:scaleX(0.8602);text-shadow:.6px .6px 0 rgba(0,0,0,.6);">Fade In</span><span class="t" style="font-size:5.9px;line-height:8px;top:10.90px;color:#a3a57e;font-style:italic;left:14.40px;transform-origin:0 50%;transform:scaleX(0.9542);">Target is Audio Component</span><svg class="a" style="left:5.00px;top:24.90px" width="7.4" height="8.3" viewBox="0 0 8 9"><path d="M1.3 1 H3.9 L7 4.5 L3.9 8 H1.3 Q.9 8 .9 7.6 V1.4 Q.9 1 1.3 1 Z" fill="#ffffff" stroke="#ffffff" stroke-width="0.3"/></svg><svg class="a" style="left:90.20px;top:24.90px" width="7.4" height="8.3" viewBox="0 0 8 9"><path d="M1.3 1 H3.9 L7 4.5 L3.9 8 H1.3 Q.9 8 .9 7.6 V1.4 Q.9 1 1.3 1 Z" fill="#ffffff" stroke="#ffffff" stroke-width="0.3"/></svg><svg class="a" style="left:3.60px;top:39.30px" width="11" height="10" viewBox="0 0 11 10"><circle cx="5" cy="5" r="3.0" fill="#1a9fe6" stroke="#1a9fe6" stroke-width="0"/><path d="M8.3 3.7 L9.8 5 L8.3 6.3 Z" fill="#1a9fe6"/></svg><span class="t" style="font-size:5.9px;line-height:8px;top:41.00px;color:#dededa;left:15.60px;transform-origin:0 50%;letter-spacing:0.105px;">Target</span><svg class="a" style="left:3.60px;top:55.30px" width="11" height="10" viewBox="0 0 11 10"><rect x="1.6" y="2.6" width="6.4" height="4.8" rx="2.4" fill="#0d0d0d" stroke="#4fc44a" stroke-width="1.1"/><path d="M8.5 3.8 L9.9 5 L8.5 6.2 Z" fill="#4fc44a"/></svg><span class="t" style="font-size:5.9px;line-height:8px;top:56.80px;color:#dededa;left:15.60px;transform-origin:0 50%;transform:scaleX(0.9458);">Fade in Duration</span><div class="vbox" style="left:60.3px;top:55.7px;width:14.5px;height:9.9px"></div><span class="t" style="font-size:6.4px;line-height:8px;top:56.70px;color:#b9b9b0;left:63.30px;transform-origin:0 50%;transform:scaleX(0.9223);">3,0</span><svg class="a" style="left:49.30px;top:72.35px" width="6.4" height="4.5" viewBox="0 0 6.4 4.5"><path d="M1 1 L3.2 3.5 L5.4 1" fill="none" stroke="#e6e6e6" stroke-width="1.1"/></svg></div>
<div class="varn" style="left:728px;top:489px;width:66px;height:18px;"><span class="t" style="font-size:6.1px;line-height:8px;top:5.00px;color:#e4e4e0;left:8.50px;transform-origin:0 50%;transform:scaleX(0.9909);">MS AMB Plain</span><svg class="a" style="left:47.60px;top:3.70px" width="11" height="10" viewBox="0 0 11 10"><circle cx="5" cy="5" r="3.0" fill="#1a9fe6" stroke="#1a9fe6" stroke-width="0"/><path d="M8.3 3.7 L9.8 5 L8.3 6.3 Z" fill="#1a9fe6"/></svg></div>
<div class="node" style="left:968px;top:393px;width:117px;height:78px;"><div class="nt blue" style="height:19px"></div><svg class="a" style="left:5.4px;top:1.6px" width="7" height="8" viewBox="0 0 7 8"><path d="M6.2 1.2 Q4.2 .4 3.8 2.4 L2.8 6.4 Q2.4 7.8 .8 7.2 M1.8 3.6 H5.4" fill="none" stroke="#74c0f0" stroke-width=".9"/></svg><span class="t" style="font-size:8px;line-height:10px;top:0.00px;color:#d4d6d4;font-weight:700;left:13.40px;transform-origin:0 50%;transform:scaleX(0.8062);text-shadow:.6px .6px 0 rgba(0,0,0,.6);">Set State</span><span class="t" style="font-size:5.9px;line-height:8px;top:10.90px;color:#a3a57e;font-style:italic;left:14.60px;transform-origin:0 50%;transform:scaleX(0.9595);">Target is Soundscape Subsystem</span><svg class="a" style="left:4.90px;top:24.60px" width="7.4" height="8.3" viewBox="0 0 8 9"><path d="M1.3 1 H3.9 L7 4.5 L3.9 8 H1.3 Q.9 8 .9 7.6 V1.4 Q.9 1 1.3 1 Z" fill="#ffffff" stroke="#ffffff" stroke-width="0.3"/></svg><svg class="a" style="left:102.70px;top:24.60px" width="7.4" height="8.3" viewBox="0 0 8 9"><path d="M1.3 1 H3.9 L7 4.5 L3.9 8 H1.3 Q.9 8 .9 7.6 V1.4 Q.9 1 1.3 1 Z" fill="#ffffff" stroke="#ffffff" stroke-width="0.3"/></svg><svg class="a" style="left:3.60px;top:39.30px" width="11" height="10" viewBox="0 0 11 10"><circle cx="5" cy="5" r="3.0" fill="#1a9fe6" stroke="#1a9fe6" stroke-width="0"/><path d="M8.3 3.7 L9.8 5 L8.3 6.3 Z" fill="#1a9fe6"/></svg><span class="t" style="font-size:5.9px;line-height:8px;top:41.20px;color:#dededa;left:15.80px;transform-origin:0 50%;letter-spacing:0.085px;">Target</span><svg class="a" style="left:3.60px;top:58.80px" width="11" height="10" viewBox="0 0 11 10"><circle cx="5" cy="5" r="2.65" fill="#0d0d0d" stroke="#3f7193" stroke-width="1.1"/><path d="M8.3 3.7 L9.8 5 L8.3 6.3 Z" fill="#3f7193"/></svg><span class="t" style="font-size:5.9px;line-height:8px;top:55.80px;color:#dededa;left:15.80px;transform-origin:0 50%;transform:scaleX(0.9594);">Soundscape State</span><div class="chip" style="left:19px;top:64.2px;width:23.8px;height:7.6px"></div><span class="t" style="font-size:5px;line-height:8px;top:64.10px;color:#e0e0dc;left:21.80px;transform-origin:0 50%;transform:scaleX(0.9618);">Plain</span><svg class="a" style="left:34.4px;top:65.8px" width="4.6" height="4.6" viewBox="0 0 4.6 4.6"><path d="M.5 .5 L4.1 4.1 M4.1 .5 L.5 4.1" stroke="#e8e8e8" stroke-width=".8"/></svg><svg class="a" style="left:44.60px;top:66.20px" width="5.6" height="4" viewBox="0 0 5.6 4"><path d="M1 1 L2.8 3 L4.6 1" fill="none" stroke="#dcdcdc" stroke-width="0.8"/></svg></div>
<div class="node" style="left:1136px;top:401px;width:118px;height:78px;"><div class="nt blue" style="height:19px"></div><svg class="a" style="left:5.4px;top:1.6px" width="7" height="8" viewBox="0 0 7 8"><path d="M6.2 1.2 Q4.2 .4 3.8 2.4 L2.8 6.4 Q2.4 7.8 .8 7.2 M1.8 3.6 H5.4" fill="none" stroke="#74c0f0" stroke-width=".9"/></svg><span class="t" style="font-size:8px;line-height:10px;top:0.00px;color:#d4d6d4;font-weight:700;left:13.40px;transform-origin:0 50%;transform:scaleX(0.7991);text-shadow:.6px .6px 0 rgba(0,0,0,.6);">Clear State</span><span class="t" style="font-size:5.9px;line-height:8px;top:10.90px;color:#a3a57e;font-style:italic;left:14.60px;transform-origin:0 50%;transform:scaleX(0.9595);">Target is Soundscape Subsystem</span><svg class="a" style="left:4.90px;top:24.60px" width="7.4" height="8.3" viewBox="0 0 8 9"><path d="M1.3 1 H3.9 L7 4.5 L3.9 8 H1.3 Q.9 8 .9 7.6 V1.4 Q.9 1 1.3 1 Z" fill="#ffffff" stroke="#ffffff" stroke-width="0.3"/></svg><svg class="a" style="left:102.70px;top:24.60px" width="7.4" height="8.3" viewBox="0 0 8 9"><path d="M1.3 1 H3.9 L7 4.5 L3.9 8 H1.3 Q.9 8 .9 7.6 V1.4 Q.9 1 1.3 1 Z" fill="none" stroke="#ffffff" stroke-width="0.75"/></svg><svg class="a" style="left:3.60px;top:39.30px" width="11" height="10" viewBox="0 0 11 10"><circle cx="5" cy="5" r="3.0" fill="#1a9fe6" stroke="#1a9fe6" stroke-width="0"/><path d="M8.3 3.7 L9.8 5 L8.3 6.3 Z" fill="#1a9fe6"/></svg><span class="t" style="font-size:5.9px;line-height:8px;top:41.20px;color:#dededa;left:15.80px;transform-origin:0 50%;letter-spacing:0.085px;">Target</span><svg class="a" style="left:3.60px;top:58.80px" width="11" height="10" viewBox="0 0 11 10"><circle cx="5" cy="5" r="2.65" fill="#0d0d0d" stroke="#3f7193" stroke-width="1.1"/><path d="M8.3 3.7 L9.8 5 L8.3 6.3 Z" fill="#3f7193"/></svg><span class="t" style="font-size:5.9px;line-height:8px;top:55.80px;color:#dededa;left:15.80px;transform-origin:0 50%;transform:scaleX(0.9594);">Soundscape State</span><div class="chip" style="left:19px;top:64.2px;width:36.3px;height:7.6px"></div><span class="t" style="font-size:5px;line-height:8px;top:64.10px;color:#e0e0dc;left:21.80px;transform-origin:0 50%;transform:scaleX(0.8350);">Forest_01</span><svg class="a" style="left:46.9px;top:65.8px" width="4.6" height="4.6" viewBox="0 0 4.6 4.6"><path d="M.5 .5 L4.1 4.1 M4.1 .5 L.5 4.1" stroke="#e8e8e8" stroke-width=".8"/></svg><svg class="a" style="left:57.10px;top:66.20px" width="5.6" height="4" viewBox="0 0 5.6 4"><path d="M1 1 L2.8 3 L4.6 1" fill="none" stroke="#dcdcdc" stroke-width="0.8"/></svg></div>
<div class="node" style="left:24px;top:681px;width:178px;height:122px;"><div class="nt red" style="height:11px"></div><svg class="a" style="left:4px;top:1.9px" width="8" height="8" viewBox="0 0 9 9"><path d="M4.6 .8 L8.3 4.5 L4.6 8.2 L.9 4.5 Z" fill="#5c0a10" stroke="#efe3e6" stroke-width="1.05"/><path d="M.2 4.5 L2.6 2.9 V6.1 Z" fill="#efe3e6"/><path d="M2 4.5 H4.6" stroke="#efe3e6" stroke-width="1"/></svg><span class="t" style="font-size:8px;line-height:10px;top:0.60px;color:#e6dede;font-weight:700;left:13.20px;transform-origin:0 50%;transform:scaleX(0.8167);text-shadow:.6px .6px 0 rgba(40,0,0,.8);">On Component Begin Overlap (Box_Forest_02)</span><div class="a" style="left:167.40px;top:3px;width:6px;height:5px;background:#1c0506;border:1px solid #b8161f"></div><svg class="a" style="left:164.50px;top:18.40px" width="7.4" height="8.3" viewBox="0 0 8 9"><path d="M1.3 1 H3.9 L7 4.5 L3.9 8 H1.3 Q.9 8 .9 7.6 V1.4 Q.9 1 1.3 1 Z" fill="#ffffff" stroke="#ffffff" stroke-width="0.3"/></svg><span class="t" style="font-size:5.9px;line-height:8px;top:33.70px;color:#dededa;right:15.50px;transform-origin:100% 50%;transform:scaleX(0.9385);">Overlapped Component</span><svg class="a" style="left:161.40px;top:32.00px" width="11" height="10" viewBox="0 0 11 10"><circle cx="5" cy="5" r="2.65" fill="#0d0d0d" stroke="#1a9fe6" stroke-width="1.1"/><path d="M8.3 3.7 L9.8 5 L8.3 6.3 Z" fill="#1a9fe6"/></svg><span class="t" style="font-size:5.9px;line-height:8px;top:48.75px;color:#dededa;right:15.50px;transform-origin:100% 50%;transform:scaleX(0.9867);">Other Actor</span><svg class="a" style="left:161.40px;top:47.05px" width="11" height="10" viewBox="0 0 11 10"><circle cx="5" cy="5" r="3.0" fill="#1a9fe6" stroke="#1a9fe6" stroke-width="0"/><path d="M8.3 3.7 L9.8 5 L8.3 6.3 Z" fill="#1a9fe6"/></svg><span class="t" style="font-size:5.9px;line-height:8px;top:63.80px;color:#dededa;right:15.50px;transform-origin:100% 50%;transform:scaleX(0.9472);">Other Comp</span><svg class="a" style="left:161.40px;top:62.10px" width="11" height="10" viewBox="0 0 11 10"><circle cx="5" cy="5" r="2.65" fill="#0d0d0d" stroke="#1a9fe6" stroke-width="1.1"/><path d="M8.3 3.7 L9.8 5 L8.3 6.3 Z" fill="#1a9fe6"/></svg><span class="t" style="font-size:5.9px;line-height:8px;top:78.85px;color:#dededa;right:15.50px;transform-origin:100% 50%;transform:scaleX(0.9401);">Other Body Index</span><svg class="a" style="left:161.40px;top:77.15px" width="11" height="10" viewBox="0 0 11 10"><circle cx="5" cy="5" r="2.65" fill="#0d0d0d" stroke="#4fc44a" stroke-width="1.1"/><path d="M8.3 3.7 L9.8 5 L8.3 6.3 Z" fill="#4fc44a"/></svg><span class="t" style="font-size:5.9px;line-height:8px;top:93.90px;color:#dededa;right:15.50px;transform-origin:100% 50%;transform:scaleX(0.9609);">From Sweep</span><svg class="a" style="left:161.40px;top:92.20px" width="11" height="10" viewBox="0 0 11 10"><circle cx="5" cy="5" r="3.0" fill="#7a1014" stroke="#7a1014" stroke-width="0"/><path d="M8.3 3.7 L9.8 5 L8.3 6.3 Z" fill="#7a1014"/></svg><span class="t" style="font-size:5.9px;line-height:8px;top:108.95px;color:#dededa;right:15.50px;transform-origin:100% 50%;transform:scaleX(0.9929);">Sweep Result</span><svg class="a" style="left:161.40px;top:107.25px" width="11" height="10" viewBox="0 0 11 10"><circle cx="5" cy="5" r="2.65" fill="#0d0d0d" stroke="#2d6a92" stroke-width="1.1"/><path d="M8.3 3.7 L9.8 5 L8.3 6.3 Z" fill="#2d6a92"/></svg></div>
<div class="node" style="left:377px;top:657px;width:87px;height:47px;"><div class="nt grey" style="height:11px"></div><svg class="a" style="left:4px;top:1px" width="9" height="9" viewBox="0 0 9 9"><path d="M8 1.9 H4.2 Q3 1.9 3 3.1 V5.9 Q3 7.1 4.2 7.1 H8" fill="none" stroke="#f2f2f2" stroke-width="1.3"/><path d="M.4 4.5 L2.6 2.8 V6.2 Z" fill="#f2f2f2"/><path d="M1.6 4.5 H3" stroke="#f2f2f2" stroke-width="1.1"/></svg><span class="t" style="font-size:7.8px;line-height:10px;top:-0.40px;color:#d2d2ce;left:14.20px;transform-origin:0 50%;transform:scaleX(0.8941);text-shadow:.6px .6px 0 rgba(0,0,0,.55);">Branch</span><svg class="a" style="left:5.20px;top:16.20px" width="7.4" height="8.3" viewBox="0 0 8 9"><path d="M1.3 1 H3.9 L7 4.5 L3.9 8 H1.3 Q.9 8 .9 7.6 V1.4 Q.9 1 1.3 1 Z" fill="#ffffff" stroke="#ffffff" stroke-width="0.3"/></svg><span class="t" style="font-size:5.9px;line-height:8px;top:16.90px;color:#dededa;right:14.00px;transform-origin:100% 50%;transform:scaleX(0.9491);">True</span><svg class="a" style="left:73.20px;top:16.20px" width="7.4" height="8.3" viewBox="0 0 8 9"><path d="M1.3 1 H3.9 L7 4.5 L3.9 8 H1.3 Q.9 8 .9 7.6 V1.4 Q.9 1 1.3 1 Z" fill="#ffffff" stroke="#ffffff" stroke-width="0.3"/></svg><svg class="a" style="left:4.00px;top:30.50px" width="11" height="10" viewBox="0 0 11 10"><circle cx="5" cy="5" r="3.0" fill="#b01a20" stroke="#b01a20" stroke-width="0"/><path d="M8.3 3.7 L9.8 5 L8.3 6.3 Z" fill="#b01a20"/></svg><span class="t" style="font-size:5.9px;line-height:8px;top:31.90px;color:#dededa;left:15.80px;transform-origin:0 50%;letter-spacing:0.039px;">Condition</span><span class="t" style="font-size:5.9px;line-height:8px;top:32.60px;color:#dededa;right:14.00px;transform-origin:100% 50%;transform:scaleX(0.9649);">False</span><svg class="a" style="left:73.20px;top:32.00px" width="7.4" height="8.3" viewBox="0 0 8 9"><path d="M1.3 1 H3.9 L7 4.5 L3.9 8 H1.3 Q.9 8 .9 7.6 V1.4 Q.9 1 1.3 1 Z" fill="none" stroke="#ffffff" stroke-width="0.75"/></svg></div>
<div class="node" style="left:512px;top:657px;width:88px;height:47px;"><div class="nt grey" style="height:11px"></div><svg class="a" style="left:4px;top:1px" width="9" height="9" viewBox="0 0 9 9"><path d="M8 1.9 H4.2 Q3 1.9 3 3.1 V5.9 Q3 7.1 4.2 7.1 H8" fill="none" stroke="#f2f2f2" stroke-width="1.3"/><path d="M.4 4.5 L2.6 2.8 V6.2 Z" fill="#f2f2f2"/><path d="M1.6 4.5 H3" stroke="#f2f2f2" stroke-width="1.1"/></svg><span class="t" style="font-size:7.8px;line-height:10px;top:-0.40px;color:#d2d2ce;left:14.20px;transform-origin:0 50%;transform:scaleX(0.8941);text-shadow:.6px .6px 0 rgba(0,0,0,.55);">Branch</span><svg class="a" style="left:5.20px;top:16.20px" width="7.4" height="8.3" viewBox="0 0 8 9"><path d="M1.3 1 H3.9 L7 4.5 L3.9 8 H1.3 Q.9 8 .9 7.6 V1.4 Q.9 1 1.3 1 Z" fill="#ffffff" stroke="#ffffff" stroke-width="0.3"/></svg><span class="t" style="font-size:5.9px;line-height:8px;top:16.90px;color:#dededa;right:14.00px;transform-origin:100% 50%;transform:scaleX(0.9491);">True</span><svg class="a" style="left:73.20px;top:16.20px" width="7.4" height="8.3" viewBox="0 0 8 9"><path d="M1.3 1 H3.9 L7 4.5 L3.9 8 H1.3 Q.9 8 .9 7.6 V1.4 Q.9 1 1.3 1 Z" fill="#ffffff" stroke="#ffffff" stroke-width="0.3"/></svg><svg class="a" style="left:4.00px;top:30.50px" width="11" height="10" viewBox="0 0 11 10"><circle cx="5" cy="5" r="3.0" fill="#b01a20" stroke="#b01a20" stroke-width="0"/><path d="M8.3 3.7 L9.8 5 L8.3 6.3 Z" fill="#b01a20"/></svg><span class="t" style="font-size:5.9px;line-height:8px;top:31.90px;color:#dededa;left:15.80px;transform-origin:0 50%;letter-spacing:0.039px;">Condition</span><span class="t" style="font-size:5.9px;line-height:8px;top:32.60px;color:#dededa;right:14.00px;transform-origin:100% 50%;transform:scaleX(0.9649);">False</span><svg class="a" style="left:73.20px;top:32.00px" width="7.4" height="8.3" viewBox="0 0 8 9"><path d="M1.3 1 H3.9 L7 4.5 L3.9 8 H1.3 Q.9 8 .9 7.6 V1.4 Q.9 1 1.3 1 Z" fill="none" stroke="#ffffff" stroke-width="0.75"/></svg></div>
<div class="node" style="left:656px;top:665px;width:109px;height:81px;"><div class="nt blue" style="height:19px"></div><svg class="a" style="left:5.4px;top:1.6px" width="7" height="8" viewBox="0 0 7 8"><path d="M6.2 1.2 Q4.2 .4 3.8 2.4 L2.8 6.4 Q2.4 7.8 .8 7.2 M1.8 3.6 H5.4" fill="none" stroke="#74c0f0" stroke-width=".9"/></svg><span class="t" style="font-size:8px;line-height:10px;top:0.00px;color:#d4d6d4;font-weight:700;left:13.60px;transform-origin:0 50%;transform:scaleX(0.8335);text-shadow:.6px .6px 0 rgba(0,0,0,.6);">Fade Out</span><span class="t" style="font-size:5.9px;line-height:8px;top:10.90px;color:#a3a57e;font-style:italic;left:14.40px;transform-origin:0 50%;transform:scaleX(0.9584);">Target is Audio Component</span><svg class="a" style="left:5.00px;top:24.90px" width="7.4" height="8.3" viewBox="0 0 8 9"><path d="M1.3 1 H3.9 L7 4.5 L3.9 8 H1.3 Q.9 8 .9 7.6 V1.4 Q.9 1 1.3 1 Z" fill="#ffffff" stroke="#ffffff" stroke-width="0.3"/></svg><svg class="a" style="left:93.90px;top:24.90px" width="7.4" height="8.3" viewBox="0 0 8 9"><path d="M1.3 1 H3.9 L7 4.5 L3.9 8 H1.3 Q.9 8 .9 7.6 V1.4 Q.9 1 1.3 1 Z" fill="#ffffff" stroke="#ffffff" stroke-width="0.3"/></svg><svg class="a" style="left:3.60px;top:39.30px" width="11" height="10" viewBox="0 0 11 10"><circle cx="5" cy="5" r="3.0" fill="#1a9fe6" stroke="#1a9fe6" stroke-width="0"/><path d="M8.3 3.7 L9.8 5 L8.3 6.3 Z" fill="#1a9fe6"/></svg><span class="t" style="font-size:5.9px;line-height:8px;top:41.00px;color:#dededa;left:15.60px;transform-origin:0 50%;letter-spacing:0.105px;">Target</span><svg class="a" style="left:3.60px;top:55.30px" width="11" height="10" viewBox="0 0 11 10"><rect x="1.6" y="2.6" width="6.4" height="4.8" rx="2.4" fill="#0d0d0d" stroke="#4fc44a" stroke-width="1.1"/><path d="M8.5 3.8 L9.9 5 L8.5 6.2 Z" fill="#4fc44a"/></svg><span class="t" style="font-size:5.9px;line-height:8px;top:56.80px;color:#dededa;left:15.60px;transform-origin:0 50%;transform:scaleX(0.9243);">Fade Out Duration</span><div class="vbox" style="left:64.0px;top:55.7px;width:14.5px;height:9.9px"></div><span class="t" style="font-size:6.4px;line-height:8px;top:56.70px;color:#b9b9b0;left:67.00px;transform-origin:0 50%;transform:scaleX(0.9223);">3,0</span><svg class="a" style="left:51.40px;top:72.35px" width="6.4" height="4.5" viewBox="0 0 6.4 4.5"><path d="M1 1 L3.2 3.5 L5.4 1" fill="none" stroke="#e6e6e6" stroke-width="1.1"/></svg></div>
<div class="node" style="left:808px;top:673px;width:105px;height:81px;"><div class="nt blue" style="height:19px"></div><svg class="a" style="left:5.4px;top:1.6px" width="7" height="8" viewBox="0 0 7 8"><path d="M6.2 1.2 Q4.2 .4 3.8 2.4 L2.8 6.4 Q2.4 7.8 .8 7.2 M1.8 3.6 H5.4" fill="none" stroke="#74c0f0" stroke-width=".9"/></svg><span class="t" style="font-size:8px;line-height:10px;top:0.00px;color:#d4d6d4;font-weight:700;left:13.60px;transform-origin:0 50%;transform:scaleX(0.8602);text-shadow:.6px .6px 0 rgba(0,0,0,.6);">Fade In</span><span class="t" style="font-size:5.9px;line-height:8px;top:10.90px;color:#a3a57e;font-style:italic;left:14.40px;transform-origin:0 50%;transform:scaleX(0.9542);">Target is Audio Component</span><svg class="a" style="left:5.00px;top:24.90px" width="7.4" height="8.3" viewBox="0 0 8 9"><path d="M1.3 1 H3.9 L7 4.5 L3.9 8 H1.3 Q.9 8 .9 7.6 V1.4 Q.9 1 1.3 1 Z" fill="#ffffff" stroke="#ffffff" stroke-width="0.3"/></svg><svg class="a" style="left:90.20px;top:24.90px" width="7.4" height="8.3" viewBox="0 0 8 9"><path d="M1.3 1 H3.9 L7 4.5 L3.9 8 H1.3 Q.9 8 .9 7.6 V1.4 Q.9 1 1.3 1 Z" fill="#ffffff" stroke="#ffffff" stroke-width="0.3"/></svg><svg class="a" style="left:3.60px;top:39.30px" width="11" height="10" viewBox="0 0 11 10"><circle cx="5" cy="5" r="3.0" fill="#1a9fe6" stroke="#1a9fe6" stroke-width="0"/><path d="M8.3 3.7 L9.8 5 L8.3 6.3 Z" fill="#1a9fe6"/></svg><span class="t" style="font-size:5.9px;line-height:8px;top:41.00px;color:#dededa;left:15.60px;transform-origin:0 50%;letter-spacing:0.105px;">Target</span><svg class="a" style="left:3.60px;top:55.30px" width="11" height="10" viewBox="0 0 11 10"><rect x="1.6" y="2.6" width="6.4" height="4.8" rx="2.4" fill="#0d0d0d" stroke="#4fc44a" stroke-width="1.1"/><path d="M8.5 3.8 L9.9 5 L8.5 6.2 Z" fill="#4fc44a"/></svg><span class="t" style="font-size:5.9px;line-height:8px;top:56.80px;color:#dededa;left:15.60px;transform-origin:0 50%;transform:scaleX(0.9458);">Fade in Duration</span><div class="vbox" style="left:60.3px;top:55.7px;width:14.5px;height:9.9px"></div><span class="t" style="font-size:6.4px;line-height:8px;top:56.70px;color:#b9b9b0;left:63.30px;transform-origin:0 50%;transform:scaleX(0.9223);">3,0</span><svg class="a" style="left:49.30px;top:72.35px" width="6.4" height="4.5" viewBox="0 0 6.4 4.5"><path d="M1 1 L3.2 3.5 L5.4 1" fill="none" stroke="#e6e6e6" stroke-width="1.1"/></svg></div>
<div class="node" style="left:968px;top:681px;width:118px;height:79px;"><div class="nt blue" style="height:19px"></div><svg class="a" style="left:5.4px;top:1.6px" width="7" height="8" viewBox="0 0 7 8"><path d="M6.2 1.2 Q4.2 .4 3.8 2.4 L2.8 6.4 Q2.4 7.8 .8 7.2 M1.8 3.6 H5.4" fill="none" stroke="#74c0f0" stroke-width=".9"/></svg><span class="t" style="font-size:8px;line-height:10px;top:0.00px;color:#d4d6d4;font-weight:700;left:13.40px;transform-origin:0 50%;transform:scaleX(0.8062);text-shadow:.6px .6px 0 rgba(0,0,0,.6);">Set State</span><span class="t" style="font-size:5.9px;line-height:8px;top:10.90px;color:#a3a57e;font-style:italic;left:14.60px;transform-origin:0 50%;transform:scaleX(0.9595);">Target is Soundscape Subsystem</span><svg class="a" style="left:4.90px;top:24.60px" width="7.4" height="8.3" viewBox="0 0 8 9"><path d="M1.3 1 H3.9 L7 4.5 L3.9 8 H1.3 Q.9 8 .9 7.6 V1.4 Q.9 1 1.3 1 Z" fill="#ffffff" stroke="#ffffff" stroke-width="0.3"/></svg><svg class="a" style="left:102.70px;top:24.60px" width="7.4" height="8.3" viewBox="0 0 8 9"><path d="M1.3 1 H3.9 L7 4.5 L3.9 8 H1.3 Q.9 8 .9 7.6 V1.4 Q.9 1 1.3 1 Z" fill="#ffffff" stroke="#ffffff" stroke-width="0.3"/></svg><svg class="a" style="left:3.60px;top:39.30px" width="11" height="10" viewBox="0 0 11 10"><circle cx="5" cy="5" r="3.0" fill="#1a9fe6" stroke="#1a9fe6" stroke-width="0"/><path d="M8.3 3.7 L9.8 5 L8.3 6.3 Z" fill="#1a9fe6"/></svg><span class="t" style="font-size:5.9px;line-height:8px;top:41.20px;color:#dededa;left:15.80px;transform-origin:0 50%;letter-spacing:0.085px;">Target</span><svg class="a" style="left:3.60px;top:58.80px" width="11" height="10" viewBox="0 0 11 10"><circle cx="5" cy="5" r="2.65" fill="#0d0d0d" stroke="#3f7193" stroke-width="1.1"/><path d="M8.3 3.7 L9.8 5 L8.3 6.3 Z" fill="#3f7193"/></svg><span class="t" style="font-size:5.9px;line-height:8px;top:55.80px;color:#dededa;left:15.80px;transform-origin:0 50%;transform:scaleX(0.9594);">Soundscape State</span><div class="chip" style="left:19px;top:64.2px;width:36.3px;height:7.6px"></div><span class="t" style="font-size:5px;line-height:8px;top:64.10px;color:#e0e0dc;left:21.80px;transform-origin:0 50%;transform:scaleX(0.8350);">Forest_02</span><svg class="a" style="left:46.9px;top:65.8px" width="4.6" height="4.6" viewBox="0 0 4.6 4.6"><path d="M.5 .5 L4.1 4.1 M4.1 .5 L.5 4.1" stroke="#e8e8e8" stroke-width=".8"/></svg><svg class="a" style="left:57.10px;top:66.20px" width="5.6" height="4" viewBox="0 0 5.6 4"><path d="M1 1 L2.8 3 L4.6 1" fill="none" stroke="#dcdcdc" stroke-width="0.8"/></svg></div>
<div class="node" style="left:1136px;top:681px;width:118px;height:79px;"><div class="nt blue" style="height:19px"></div><svg class="a" style="left:5.4px;top:1.6px" width="7" height="8" viewBox="0 0 7 8"><path d="M6.2 1.2 Q4.2 .4 3.8 2.4 L2.8 6.4 Q2.4 7.8 .8 7.2 M1.8 3.6 H5.4" fill="none" stroke="#74c0f0" stroke-width=".9"/></svg><span class="t" style="font-size:8px;line-height:10px;top:0.00px;color:#d4d6d4;font-weight:700;left:13.40px;transform-origin:0 50%;transform:scaleX(0.7991);text-shadow:.6px .6px 0 rgba(0,0,0,.6);">Clear State</span><span class="t" style="font-size:5.9px;line-height:8px;top:10.90px;color:#a3a57e;font-style:italic;left:14.60px;transform-origin:0 50%;transform:scaleX(0.9595);">Target is Soundscape Subsystem</span><svg class="a" style="left:4.90px;top:24.60px" width="7.4" height="8.3" viewBox="0 0 8 9"><path d="M1.3 1 H3.9 L7 4.5 L3.9 8 H1.3 Q.9 8 .9 7.6 V1.4 Q.9 1 1.3 1 Z" fill="#ffffff" stroke="#ffffff" stroke-width="0.3"/></svg><svg class="a" style="left:102.70px;top:24.60px" width="7.4" height="8.3" viewBox="0 0 8 9"><path d="M1.3 1 H3.9 L7 4.5 L3.9 8 H1.3 Q.9 8 .9 7.6 V1.4 Q.9 1 1.3 1 Z" fill="none" stroke="#ffffff" stroke-width="0.75"/></svg><svg class="a" style="left:3.60px;top:39.30px" width="11" height="10" viewBox="0 0 11 10"><circle cx="5" cy="5" r="3.0" fill="#1a9fe6" stroke="#1a9fe6" stroke-width="0"/><path d="M8.3 3.7 L9.8 5 L8.3 6.3 Z" fill="#1a9fe6"/></svg><span class="t" style="font-size:5.9px;line-height:8px;top:41.20px;color:#dededa;left:15.80px;transform-origin:0 50%;letter-spacing:0.085px;">Target</span><svg class="a" style="left:3.60px;top:58.80px" width="11" height="10" viewBox="0 0 11 10"><circle cx="5" cy="5" r="2.65" fill="#0d0d0d" stroke="#3f7193" stroke-width="1.1"/><path d="M8.3 3.7 L9.8 5 L8.3 6.3 Z" fill="#3f7193"/></svg><span class="t" style="font-size:5.9px;line-height:8px;top:55.80px;color:#dededa;left:15.80px;transform-origin:0 50%;transform:scaleX(0.9594);">Soundscape State</span><div class="chip" style="left:19px;top:64.2px;width:23.8px;height:7.6px"></div><span class="t" style="font-size:5px;line-height:8px;top:64.10px;color:#e0e0dc;left:21.80px;transform-origin:0 50%;transform:scaleX(0.9618);">Plain</span><svg class="a" style="left:34.4px;top:65.8px" width="4.6" height="4.6" viewBox="0 0 4.6 4.6"><path d="M.5 .5 L4.1 4.1 M4.1 .5 L.5 4.1" stroke="#e8e8e8" stroke-width=".8"/></svg><svg class="a" style="left:44.60px;top:66.20px" width="5.6" height="4" viewBox="0 0 5.6 4"><path d="M1 1 L2.8 3 L4.6 1" fill="none" stroke="#dcdcdc" stroke-width="0.8"/></svg></div>
<span class="t" style="font-size:64.5px;line-height:70px;top:615.00px;color:rgba(255,255,255,.26);font-weight:700;left:998.00px;transform-origin:0 50%;transform:scaleX(0.7762);transform-origin:0 50%;">BLUEPRINT</span><div class="a" style="left:0;top:0;width:1297px;height:13.5px;background:rgba(8,8,8,.45)"></div><div class="a" style="left:0;top:0;width:1297px;height:9px;background:rgba(8,8,8,.48)"></div><div class="a" style="left:48px;top:0;width:1px;height:11px;background:rgba(0,0,0,.6)"></div><div class="a" style="left:126px;top:0;width:1px;height:11px;background:rgba(0,0,0,.6)"></div><svg class="a" style="left:9.4px;top:-8.6px" width="13" height="12" viewBox="0 0 13 12"><path d="M6.5 .4 L8.4 4.3 L12.7 4.8 L9.5 7.7 L10.4 11.9 L6.5 9.7 L2.6 11.9 L3.5 7.7 L.3 4.8 L4.6 4.3 Z" fill="#dcdcdc"/></svg><div class="a" style="left:140.6px;top:-6px;width:5.8px;height:9.6px;background:#cfcfcf;border-radius:1.5px"></div><div class="a" style="left:153.6px;top:-6px;width:6.2px;height:9.6px;background:#cfcfcf;border-radius:1.5px"></div><span class="t" style="font-size:16px;line-height:20px;top:-14.40px;color:#c4c4c4;left:176.50px;transform-origin:0 50%;letter-spacing:1.502px;">BP_AMB_Manager</span><svg class="a" style="left:339px;top:-6px" width="10" height="12" viewBox="0 0 10 12"><path d="M1.2 1 L8.6 5.6 L1.2 10.4" fill="none" stroke="#cfcfcf" stroke-width="1.6"/></svg><div class="a" style="left:444.4px;top:-4px;width:1.4px;height:7px;background:#bdbdbd"></div><div class="a" style="left:0;top:0;width:1297px;height:689px;box-shadow:inset 0 0 14px rgba(0,0,0,.55),inset 0 0 3px rgba(0,0,0,.5);pointer-events:none"></div></div>
<div id="right">
<div class="a" style="left:0;top:0;width:303px;height:14px;background:#242424"></div><div class="a" style="left:9.5px;top:-17px;width:253px;height:22.5px;background:#0f0f0f;border:1px solid #393939;border-radius:11px"></div><svg class="a" style="left:22px;top:-10px" width="14" height="14" viewBox="0 0 14 14"><path d="M7.4 8 L12 12.4" stroke="#c4c4c4" stroke-width="1.5"/></svg><div class="a" style="left:276px;top:-6px;width:14px;height:8px;background:#c8c8c8;border-radius:1px"></div><div class="a" style="left:302.5px;top:-4px;width:1.6px;height:6px;background:#c8c8c8"></div>
<div class="rhdr" style="top:14px"></div><svg class="a" style="left:5px;top:24px" width="10.5" height="6.5" viewBox="0 0 10.5 6.5"><path d="M0 0 H10.5 L5.25 6.5 Z" fill="#8a8a84"/></svg><span class="t" style="font-size:11px;line-height:15px;top:18.60px;color:#d6d6d6;font-weight:700;left:22.30px;transform-origin:0 50%;transform:scaleX(0.9522);">Default</span>
<div class="rrow" style="top:41px"></div><svg class="a" style="left:7px;top:48.5px" width="6.5" height="11" viewBox="0 0 6.5 11"><path d="M0 0 L6.5 5.5 L0 11 Z" fill="#8a8a84"/></svg><div class="a" style="left:121px;top:41px;width:1px;height:26px;background:#161616"></div><div class="a" style="left:281px;top:41px;width:1px;height:26px;background:#161616"></div><span class="t" style="font-size:11px;line-height:15px;top:45.60px;color:#c6c6c6;left:22.30px;transform-origin:0 50%;letter-spacing:0.267px;">Palette Amb</span>
<div class="rhdr" style="top:68px"></div><svg class="a" style="left:5px;top:78px" width="10.5" height="6.5" viewBox="0 0 10.5 6.5"><path d="M0 0 H10.5 L5.25 6.5 Z" fill="#8a8a84"/></svg><span class="t" style="font-size:11px;line-height:15px;top:72.60px;color:#d6d6d6;font-weight:700;left:22.30px;transform-origin:0 50%;transform:scaleX(0.9423);">Actor Tick</span>
<div class="rrow" style="top:95px"></div><div class="a" style="left:121px;top:95px;width:1px;height:26px;background:#161616"></div><div class="a" style="left:281px;top:95px;width:1px;height:26px;background:#161616"></div><span class="t" style="font-size:11px;line-height:15px;top:99.60px;color:#c6c6c6;left:22.30px;transform-origin:0 50%;letter-spacing:0.001px;">Start with Tick En…</span><div class="cbx" style="top:99.5px"></div><svg class="a" style="left:137.8px;top:103.6px" width="12" height="10" viewBox="0 0 12 10"><path d="M1.2 5.2 L4.4 8.2 L10.8 1.4" fill="none" stroke="#3f9be0" stroke-width="1.9" stroke-linecap="round" stroke-linejoin="round"/></svg>
<div class="rrow" style="top:122px"></div><div class="a" style="left:121px;top:122px;width:1px;height:26px;background:#161616"></div><div class="a" style="left:281px;top:122px;width:1px;height:26px;background:#161616"></div><span class="t" style="font-size:11px;line-height:15px;top:126.60px;color:#c6c6c6;left:22.30px;transform-origin:0 50%;letter-spacing:0.269px;">Tick Interval (secs)</span><div class="inp" style="top:126px;height:18.5px"></div><span class="t" style="font-size:11px;line-height:15px;top:126.80px;color:#e2e2e2;left:143.00px;transform-origin:0 50%;transform:scaleX(0.8825);">0,0</span>
<div class="rrow" style="top:149px"></div><div class="a" style="left:121px;top:149px;width:1px;height:26px;background:#161616"></div><div class="a" style="left:281px;top:149px;width:1px;height:26px;background:#161616"></div><span class="t" style="font-size:11px;line-height:15px;top:153.60px;color:#c6c6c6;left:22.30px;transform-origin:0 50%;transform:scaleX(0.9961);">Allow Tick Before…</span><div class="cbx" style="top:153.5px"></div>
<div class="rrow" style="top:176px"></div><svg class="a" style="left:7px;top:183.5px" width="6.5" height="11" viewBox="0 0 6.5 11"><path d="M0 0 L6.5 5.5 L0 11 Z" fill="#8a8a84"/></svg><span class="t" style="font-size:11px;line-height:15px;top:180.60px;color:#c6c6c6;left:22.30px;transform-origin:0 50%;letter-spacing:0.009px;">Advanced</span>
<div class="rhdr" style="top:203px"></div><svg class="a" style="left:5px;top:213px" width="10.5" height="6.5" viewBox="0 0 10.5 6.5"><path d="M0 0 H10.5 L5.25 6.5 Z" fill="#8a8a84"/></svg><span class="t" style="font-size:11px;line-height:15px;top:207.60px;color:#d6d6d6;font-weight:700;left:22.30px;transform-origin:0 50%;transform:scaleX(0.9444);">Replication</span>
<div class="rrow" style="top:230px"></div><div class="a" style="left:121px;top:230px;width:1px;height:26px;background:#161616"></div><div class="a" style="left:281px;top:230px;width:1px;height:26px;background:#161616"></div><span class="t" style="font-size:11px;line-height:15px;top:234.60px;color:#c6c6c6;left:22.30px;transform-origin:0 50%;transform:scaleX(0.9748);">Only Relevant to…</span><div class="cbx" style="top:234.5px"></div>
<div class="rrow" style="top:257px"></div><div class="a" style="left:121px;top:257px;width:1px;height:26px;background:#161616"></div><div class="a" style="left:281px;top:257px;width:1px;height:26px;background:#161616"></div><span class="t" style="font-size:11px;line-height:15px;top:261.60px;color:#c6c6c6;left:22.30px;transform-origin:0 50%;letter-spacing:0.084px;">Always Relevant</span><div class="cbx" style="top:261.5px"></div>
<div class="rrow" style="top:284px"></div><div class="a" style="left:121px;top:284px;width:1px;height:26px;background:#161616"></div><div class="a" style="left:281px;top:284px;width:1px;height:26px;background:#161616"></div><span class="t" style="font-size:11px;line-height:15px;top:288.60px;color:#c6c6c6;left:22.30px;transform-origin:0 50%;transform:scaleX(0.9897);">Replicate Movem…</span><div class="cbx" style="top:288.5px"></div>
<div class="rrow" style="top:311px"></div><div class="a" style="left:121px;top:311px;width:1px;height:26px;background:#161616"></div><div class="a" style="left:281px;top:311px;width:1px;height:26px;background:#161616"></div><span class="t" style="font-size:11px;line-height:15px;top:315.60px;color:#c6c6c6;left:22.30px;transform-origin:0 50%;letter-spacing:0.022px;">Net Load on Client</span><div class="cbx" style="top:315.5px"></div><svg class="a" style="left:137.8px;top:319.6px" width="12" height="10" viewBox="0 0 12 10"><path d="M1.2 5.2 L4.4 8.2 L10.8 1.4" fill="none" stroke="#3f9be0" stroke-width="1.9" stroke-linecap="round" stroke-linejoin="round"/></svg>
<div class="rrow" style="top:338px"></div><div class="a" style="left:121px;top:338px;width:1px;height:26px;background:#161616"></div><div class="a" style="left:281px;top:338px;width:1px;height:26px;background:#161616"></div><span class="t" style="font-size:11px;line-height:15px;top:342.60px;color:#c6c6c6;left:22.30px;transform-origin:0 50%;transform:scaleX(0.9437);">Net Use Owner Re…</span><div class="cbx" style="top:342.5px"></div>
<div class="rrow" style="top:365px"></div><div class="a" style="left:121px;top:365px;width:1px;height:26px;background:#161616"></div><div class="a" style="left:281px;top:365px;width:1px;height:26px;background:#161616"></div><span class="t" style="font-size:11px;line-height:15px;top:369.60px;color:#c6c6c6;left:22.30px;transform-origin:0 50%;letter-spacing:0.127px;">Replicates</span><div class="cbx" style="top:369.5px"></div>
<div class="rrow" style="top:392px"></div><div class="a" style="left:121px;top:392px;width:1px;height:26px;background:#161616"></div><div class="a" style="left:281px;top:392px;width:1px;height:26px;background:#161616"></div><span class="t" style="font-size:11px;line-height:15px;top:396.60px;color:#c6c6c6;left:22.30px;transform-origin:0 50%;letter-spacing:0.064px;">Net Dormancy</span><div class="inp" style="top:395px;height:20.5px"></div><span class="t" style="font-size:11px;line-height:15px;top:396.80px;color:#dcdcdc;left:142.00px;transform-origin:0 50%;letter-spacing:0.043px;">Awake</span><svg class="a" style="left:236px;top:401.70000000000005px" width="10" height="6" viewBox="0 0 10 6"><path d="M0.8 0.8 L5 5 L9.2 0.8" fill="none" stroke="#d8d8d8" stroke-width="1.4"/></svg>
<div class="rrow" style="top:419px"></div><div class="a" style="left:121px;top:419px;width:1px;height:26px;background:#161616"></div><div class="a" style="left:281px;top:419px;width:1px;height:26px;background:#161616"></div><span class="t" style="font-size:11px;line-height:15px;top:423.60px;color:#c6c6c6;left:22.30px;transform-origin:0 50%;transform:scaleX(0.9793);">Net Cull Distance…</span><div class="inp" style="top:423px;height:18.5px"></div><span class="t" style="font-size:11px;line-height:15px;top:423.80px;color:#e2e2e2;left:143.00px;transform-origin:0 50%;transform:scaleX(0.9652);">225000000,0</span>
<div class="rrow" style="top:446px"></div><div class="a" style="left:121px;top:446px;width:1px;height:26px;background:#161616"></div><div class="a" style="left:281px;top:446px;width:1px;height:26px;background:#161616"></div><span class="t" style="font-size:11px;line-height:15px;top:450.60px;color:#c6c6c6;left:22.30px;transform-origin:0 50%;transform:scaleX(0.9600);">Net Update Frequ…</span><div class="inp" style="top:450px;height:18.5px"></div><span class="t" style="font-size:11px;line-height:15px;top:450.80px;color:#e2e2e2;left:143.00px;transform-origin:0 50%;transform:scaleX(0.9444);">100,0</span>
<div class="rrow" style="top:473px"></div><div class="a" style="left:121px;top:473px;width:1px;height:26px;background:#161616"></div><div class="a" style="left:281px;top:473px;width:1px;height:26px;background:#161616"></div><span class="t" style="font-size:11px;line-height:15px;top:477.60px;color:#c6c6c6;left:22.30px;transform-origin:0 50%;transform:scaleX(0.9715);">Min Net Update Fr…</span><div class="inp" style="top:477px;height:18.5px"></div><span class="t" style="font-size:11px;line-height:15px;top:477.80px;color:#e2e2e2;left:143.00px;transform-origin:0 50%;transform:scaleX(0.8825);">2,0</span>
<div class="rrow" style="top:500px"></div><div class="a" style="left:121px;top:500px;width:1px;height:26px;background:#161616"></div><div class="a" style="left:281px;top:500px;width:1px;height:26px;background:#161616"></div><span class="t" style="font-size:11px;line-height:15px;top:504.60px;color:#c6c6c6;left:22.30px;transform-origin:0 50%;letter-spacing:0.236px;">Net Priority</span><div class="inp" style="top:504px;height:18.5px"></div><span class="t" style="font-size:11px;line-height:15px;top:504.80px;color:#e2e2e2;left:143.00px;transform-origin:0 50%;transform:scaleX(0.8825);">1,0</span>
<div class="rrow" style="top:527px"></div><div class="a" style="left:121px;top:527px;width:1px;height:26px;background:#161616"></div><div class="a" style="left:281px;top:527px;width:1px;height:26px;background:#161616"></div><span class="t" style="font-size:11px;line-height:15px;top:531.60px;color:#c6c6c6;left:22.30px;transform-origin:0 50%;letter-spacing:0.021px;">Physics Replicati…</span><div class="inp" style="top:530px;height:20.5px"></div><span class="t" style="font-size:11px;line-height:15px;top:531.80px;color:#dcdcdc;left:142.00px;transform-origin:0 50%;letter-spacing:0.107px;">Default</span><svg class="a" style="left:236px;top:536.7px" width="10" height="6" viewBox="0 0 10 6"><path d="M0.8 0.8 L5 5 L9.2 0.8" fill="none" stroke="#d8d8d8" stroke-width="1.4"/></svg>
<div class="rrow" style="top:554px"></div><svg class="a" style="left:7px;top:561.5px" width="6.5" height="11" viewBox="0 0 6.5 11"><path d="M0 0 L6.5 5.5 L0 11 Z" fill="#8a8a84"/></svg><span class="t" style="font-size:11px;line-height:15px;top:558.60px;color:#c6c6c6;left:22.30px;transform-origin:0 50%;letter-spacing:0.009px;">Advanced</span>
<div class="rhdr" style="top:581px"></div><svg class="a" style="left:5px;top:591px" width="10.5" height="6.5" viewBox="0 0 10.5 6.5"><path d="M0 0 H10.5 L5.25 6.5 Z" fill="#8a8a84"/></svg><span class="t" style="font-size:11px;line-height:15px;top:585.60px;color:#d6d6d6;font-weight:700;left:22.30px;transform-origin:0 50%;transform:scaleX(0.9190);">Rendering</span>
<div class="rrow" style="top:608px"></div><div class="a" style="left:121px;top:608px;width:1px;height:26px;background:#161616"></div><div class="a" style="left:281px;top:608px;width:1px;height:26px;background:#161616"></div><span class="t" style="font-size:11px;line-height:15px;top:612.60px;color:#c6c6c6;left:22.30px;transform-origin:0 50%;transform:scaleX(0.9600);">Actor Hidden In G…</span><div class="cbx" style="top:612.5px"></div>
<div class="rrow" style="top:635px"></div><div class="a" style="left:121px;top:635px;width:1px;height:26px;background:#161616"></div><div class="a" style="left:281px;top:635px;width:1px;height:26px;background:#161616"></div><span class="t" style="font-size:11px;line-height:15px;top:639.60px;color:#c6c6c6;left:22.30px;transform-origin:0 50%;transform:scaleX(0.9792);">Editor Billboard S…</span><div class="inp" style="top:639px;height:18.5px"></div><span class="t" style="font-size:11px;line-height:15px;top:639.80px;color:#e2e2e2;left:143.00px;transform-origin:0 50%;transform:scaleX(0.8825);">1,0</span>
<div class="rhdr" style="top:662px"></div><svg class="a" style="left:5px;top:672px" width="10.5" height="6.5" viewBox="0 0 10.5 6.5"><path d="M0 0 H10.5 L5.25 6.5 Z" fill="#8a8a84"/></svg><span class="t" style="font-size:11px;line-height:15px;top:666.60px;color:#d6d6d6;font-weight:700;left:22.30px;transform-origin:0 50%;transform:scaleX(0.9149);">Collision</span>
</div>
</div>
</body></html>
